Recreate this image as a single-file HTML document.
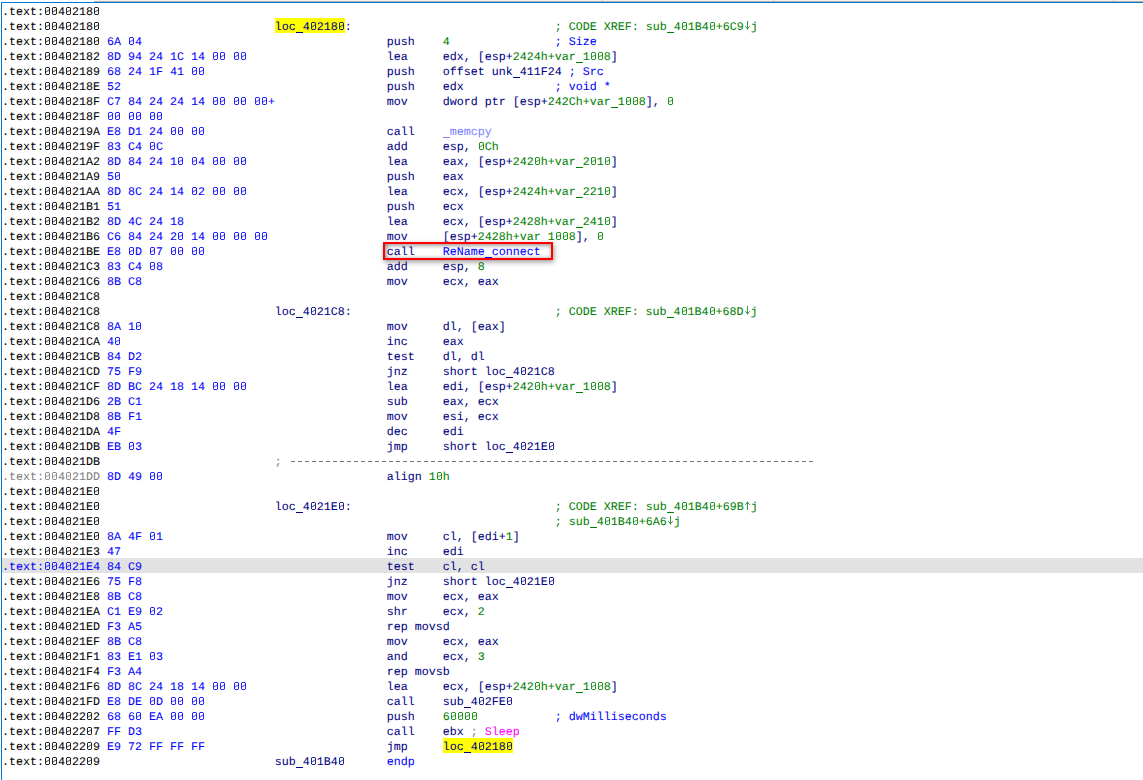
<!DOCTYPE html>
<html><head><meta charset="utf-8"><style>
html,body{margin:0;padding:0;background:#fff;}
body{width:1143px;height:780px;position:relative;overflow:hidden;font-family:"Liberation Mono",monospace;font-size:11.665px;text-rendering:geometricPrecision;-webkit-text-stroke:0.05px currentColor;}
#topbar{position:absolute;left:94px;top:0;width:1049px;height:1px;background:#f3f3f3;}
#topline{position:absolute;left:94px;top:1px;width:1049px;height:1px;background:#b8b0a8;}
#frame{position:absolute;left:1px;top:2px;width:1200px;height:800px;border-left:1px solid #0078d7;border-top:1px solid #0078d7;}
.r{position:absolute;left:2px;height:15px;line-height:15px;white-space:pre;margin-top:2px;}
.hl{position:absolute;left:2px;width:1141px;height:15px;background:#e2e2e2;}
.yl{position:absolute;width:70px;height:15px;background:#ffff00;}
.k{color:#000}
.n{color:#000080}
.g{color:#008000}
.b{color:#0000ff}
.c{color:#0000ff}
.gr{color:#808080}
.lib{color:#8080ff}
.m{color:#ff00ff}
#box{position:absolute;left:383px;top:242px;width:166px;height:14px;border:2px solid #ff0000;box-shadow:1px 2px 5px rgba(0,0,0,0.4), inset 1px 1px 5px rgba(0,0,0,0.5);}
.u{position:relative;-webkit-text-fill-color:transparent;-webkit-text-stroke-color:transparent;}
.u::after{content:'';position:absolute;left:0;top:12px;width:7px;height:1px;background:currentColor;}
.ar{position:relative;}
.ar svg{position:absolute;left:0;top:-2px;}
.dv{position:absolute;top:0;width:1px;height:1px;background:#c8c8c8;}
#dash{position:absolute;left:289px;top:461px;width:525px;height:1px;background:repeating-linear-gradient(to right,transparent 0,transparent 2px,#787878 2px,#787878 6px,transparent 6px,transparent 7px);}
.zr path{fill:currentColor;}

</style></head><body>
<div id="topbar"></div><div class="dv" style="left:602px"></div><div class="dv" style="left:773px"></div><div class="dv" style="left:1113px"></div><div id="topline"></div><div id="frame"></div>
<div class="yl" style="left:275px;top:18px"></div>
<div class="yl" style="left:443px;top:738px"></div>
<div class="hl" style="top:558px"></div>
<div class="r" style="top:3px"><span class="k">.text:<span class="ar zr"> <svg width="7" height="15"><path d="M2 4h3v1h-3zM2 11h3v1h-3zM1 5h1v6h-1zM5 5h1v6h-1z" opacity=".85"/><path d="M1 4h1v1h-1zM5 4h1v1h-1zM1 11h1v1h-1zM5 11h1v1h-1z" opacity=".25"/><path d="M1.9 8.9L5.1 7.1" stroke="currentColor" stroke-width="1.1" opacity=".6"/></svg></span><span class="ar zr"> <svg width="7" height="15"><path d="M2 4h3v1h-3zM2 11h3v1h-3zM1 5h1v6h-1zM5 5h1v6h-1z" opacity=".85"/><path d="M1 4h1v1h-1zM5 4h1v1h-1zM1 11h1v1h-1zM5 11h1v1h-1z" opacity=".25"/><path d="M1.9 8.9L5.1 7.1" stroke="currentColor" stroke-width="1.1" opacity=".6"/></svg></span>4<span class="ar zr"> <svg width="7" height="15"><path d="M2 4h3v1h-3zM2 11h3v1h-3zM1 5h1v6h-1zM5 5h1v6h-1z" opacity=".85"/><path d="M1 4h1v1h-1zM5 4h1v1h-1zM1 11h1v1h-1zM5 11h1v1h-1z" opacity=".25"/><path d="M1.9 8.9L5.1 7.1" stroke="currentColor" stroke-width="1.1" opacity=".6"/></svg></span>218<span class="ar zr"> <svg width="7" height="15"><path d="M2 4h3v1h-3zM2 11h3v1h-3zM1 5h1v6h-1zM5 5h1v6h-1z" opacity=".85"/><path d="M1 4h1v1h-1zM5 4h1v1h-1zM1 11h1v1h-1zM5 11h1v1h-1z" opacity=".25"/><path d="M1.9 8.9L5.1 7.1" stroke="currentColor" stroke-width="1.1" opacity=".6"/></svg></span></span></div>
<div class="r" style="top:18px"><span class="k">.text:<span class="ar zr"> <svg width="7" height="15"><path d="M2 4h3v1h-3zM2 11h3v1h-3zM1 5h1v6h-1zM5 5h1v6h-1z" opacity=".85"/><path d="M1 4h1v1h-1zM5 4h1v1h-1zM1 11h1v1h-1zM5 11h1v1h-1z" opacity=".25"/><path d="M1.9 8.9L5.1 7.1" stroke="currentColor" stroke-width="1.1" opacity=".6"/></svg></span><span class="ar zr"> <svg width="7" height="15"><path d="M2 4h3v1h-3zM2 11h3v1h-3zM1 5h1v6h-1zM5 5h1v6h-1z" opacity=".85"/><path d="M1 4h1v1h-1zM5 4h1v1h-1zM1 11h1v1h-1zM5 11h1v1h-1z" opacity=".25"/><path d="M1.9 8.9L5.1 7.1" stroke="currentColor" stroke-width="1.1" opacity=".6"/></svg></span>4<span class="ar zr"> <svg width="7" height="15"><path d="M2 4h3v1h-3zM2 11h3v1h-3zM1 5h1v6h-1zM5 5h1v6h-1z" opacity=".85"/><path d="M1 4h1v1h-1zM5 4h1v1h-1zM1 11h1v1h-1zM5 11h1v1h-1z" opacity=".25"/><path d="M1.9 8.9L5.1 7.1" stroke="currentColor" stroke-width="1.1" opacity=".6"/></svg></span>218<span class="ar zr"> <svg width="7" height="15"><path d="M2 4h3v1h-3zM2 11h3v1h-3zM1 5h1v6h-1zM5 5h1v6h-1z" opacity=".85"/><path d="M1 4h1v1h-1zM5 4h1v1h-1zM1 11h1v1h-1zM5 11h1v1h-1z" opacity=".25"/><path d="M1.9 8.9L5.1 7.1" stroke="currentColor" stroke-width="1.1" opacity=".6"/></svg></span></span>                         <span class="n">loc<span class="u">_</span>4<span class="ar zr"> <svg width="7" height="15"><path d="M2 4h3v1h-3zM2 11h3v1h-3zM1 5h1v6h-1zM5 5h1v6h-1z" opacity=".85"/><path d="M1 4h1v1h-1zM5 4h1v1h-1zM1 11h1v1h-1zM5 11h1v1h-1z" opacity=".25"/><path d="M1.9 8.9L5.1 7.1" stroke="currentColor" stroke-width="1.1" opacity=".6"/></svg></span>218<span class="ar zr"> <svg width="7" height="15"><path d="M2 4h3v1h-3zM2 11h3v1h-3zM1 5h1v6h-1zM5 5h1v6h-1z" opacity=".85"/><path d="M1 4h1v1h-1zM5 4h1v1h-1zM1 11h1v1h-1zM5 11h1v1h-1z" opacity=".25"/><path d="M1.9 8.9L5.1 7.1" stroke="currentColor" stroke-width="1.1" opacity=".6"/></svg></span></span><span class="n">:</span>                             <span class="g">; CODE XREF: sub<span class="u">_</span>4<span class="ar zr"> <svg width="7" height="15"><path d="M2 4h3v1h-3zM2 11h3v1h-3zM1 5h1v6h-1zM5 5h1v6h-1z" opacity=".85"/><path d="M1 4h1v1h-1zM5 4h1v1h-1zM1 11h1v1h-1zM5 11h1v1h-1z" opacity=".25"/><path d="M1.9 8.9L5.1 7.1" stroke="currentColor" stroke-width="1.1" opacity=".6"/></svg></span>1B4<span class="ar zr"> <svg width="7" height="15"><path d="M2 4h3v1h-3zM2 11h3v1h-3zM1 5h1v6h-1zM5 5h1v6h-1z" opacity=".85"/><path d="M1 4h1v1h-1zM5 4h1v1h-1zM1 11h1v1h-1zM5 11h1v1h-1z" opacity=".25"/><path d="M1.9 8.9L5.1 7.1" stroke="currentColor" stroke-width="1.1" opacity=".6"/></svg></span>+6C9<span class="ar"> <svg width="7" height="15" viewBox="0 0 7 15"><path d="M3.5 3V11.5M1.2 8.2L3.5 10.8L5.8 8.2" stroke="currentColor" stroke-width="1" fill="none" opacity=".8"/></svg></span>j</span></div>
<div class="r" style="top:33px"><span class="k">.text:<span class="ar zr"> <svg width="7" height="15"><path d="M2 4h3v1h-3zM2 11h3v1h-3zM1 5h1v6h-1zM5 5h1v6h-1z" opacity=".85"/><path d="M1 4h1v1h-1zM5 4h1v1h-1zM1 11h1v1h-1zM5 11h1v1h-1z" opacity=".25"/><path d="M1.9 8.9L5.1 7.1" stroke="currentColor" stroke-width="1.1" opacity=".6"/></svg></span><span class="ar zr"> <svg width="7" height="15"><path d="M2 4h3v1h-3zM2 11h3v1h-3zM1 5h1v6h-1zM5 5h1v6h-1z" opacity=".85"/><path d="M1 4h1v1h-1zM5 4h1v1h-1zM1 11h1v1h-1zM5 11h1v1h-1z" opacity=".25"/><path d="M1.9 8.9L5.1 7.1" stroke="currentColor" stroke-width="1.1" opacity=".6"/></svg></span>4<span class="ar zr"> <svg width="7" height="15"><path d="M2 4h3v1h-3zM2 11h3v1h-3zM1 5h1v6h-1zM5 5h1v6h-1z" opacity=".85"/><path d="M1 4h1v1h-1zM5 4h1v1h-1zM1 11h1v1h-1zM5 11h1v1h-1z" opacity=".25"/><path d="M1.9 8.9L5.1 7.1" stroke="currentColor" stroke-width="1.1" opacity=".6"/></svg></span>218<span class="ar zr"> <svg width="7" height="15"><path d="M2 4h3v1h-3zM2 11h3v1h-3zM1 5h1v6h-1zM5 5h1v6h-1z" opacity=".85"/><path d="M1 4h1v1h-1zM5 4h1v1h-1zM1 11h1v1h-1zM5 11h1v1h-1z" opacity=".25"/><path d="M1.9 8.9L5.1 7.1" stroke="currentColor" stroke-width="1.1" opacity=".6"/></svg></span></span> <span class="b">6A <span class="ar zr"> <svg width="7" height="15"><path d="M2 4h3v1h-3zM2 11h3v1h-3zM1 5h1v6h-1zM5 5h1v6h-1z" opacity=".85"/><path d="M1 4h1v1h-1zM5 4h1v1h-1zM1 11h1v1h-1zM5 11h1v1h-1z" opacity=".25"/><path d="M1.9 8.9L5.1 7.1" stroke="currentColor" stroke-width="1.1" opacity=".6"/></svg></span>4</span>                                   <span class="n">push</span>    <span class="g">4</span>               <span class="c">; Size</span></div>
<div class="r" style="top:48px"><span class="k">.text:<span class="ar zr"> <svg width="7" height="15"><path d="M2 4h3v1h-3zM2 11h3v1h-3zM1 5h1v6h-1zM5 5h1v6h-1z" opacity=".85"/><path d="M1 4h1v1h-1zM5 4h1v1h-1zM1 11h1v1h-1zM5 11h1v1h-1z" opacity=".25"/><path d="M1.9 8.9L5.1 7.1" stroke="currentColor" stroke-width="1.1" opacity=".6"/></svg></span><span class="ar zr"> <svg width="7" height="15"><path d="M2 4h3v1h-3zM2 11h3v1h-3zM1 5h1v6h-1zM5 5h1v6h-1z" opacity=".85"/><path d="M1 4h1v1h-1zM5 4h1v1h-1zM1 11h1v1h-1zM5 11h1v1h-1z" opacity=".25"/><path d="M1.9 8.9L5.1 7.1" stroke="currentColor" stroke-width="1.1" opacity=".6"/></svg></span>4<span class="ar zr"> <svg width="7" height="15"><path d="M2 4h3v1h-3zM2 11h3v1h-3zM1 5h1v6h-1zM5 5h1v6h-1z" opacity=".85"/><path d="M1 4h1v1h-1zM5 4h1v1h-1zM1 11h1v1h-1zM5 11h1v1h-1z" opacity=".25"/><path d="M1.9 8.9L5.1 7.1" stroke="currentColor" stroke-width="1.1" opacity=".6"/></svg></span>2182</span> <span class="b">8D 94 24 1C 14 <span class="ar zr"> <svg width="7" height="15"><path d="M2 4h3v1h-3zM2 11h3v1h-3zM1 5h1v6h-1zM5 5h1v6h-1z" opacity=".85"/><path d="M1 4h1v1h-1zM5 4h1v1h-1zM1 11h1v1h-1zM5 11h1v1h-1z" opacity=".25"/><path d="M1.9 8.9L5.1 7.1" stroke="currentColor" stroke-width="1.1" opacity=".6"/></svg></span><span class="ar zr"> <svg width="7" height="15"><path d="M2 4h3v1h-3zM2 11h3v1h-3zM1 5h1v6h-1zM5 5h1v6h-1z" opacity=".85"/><path d="M1 4h1v1h-1zM5 4h1v1h-1zM1 11h1v1h-1zM5 11h1v1h-1z" opacity=".25"/><path d="M1.9 8.9L5.1 7.1" stroke="currentColor" stroke-width="1.1" opacity=".6"/></svg></span> <span class="ar zr"> <svg width="7" height="15"><path d="M2 4h3v1h-3zM2 11h3v1h-3zM1 5h1v6h-1zM5 5h1v6h-1z" opacity=".85"/><path d="M1 4h1v1h-1zM5 4h1v1h-1zM1 11h1v1h-1zM5 11h1v1h-1z" opacity=".25"/><path d="M1.9 8.9L5.1 7.1" stroke="currentColor" stroke-width="1.1" opacity=".6"/></svg></span><span class="ar zr"> <svg width="7" height="15"><path d="M2 4h3v1h-3zM2 11h3v1h-3zM1 5h1v6h-1zM5 5h1v6h-1z" opacity=".85"/><path d="M1 4h1v1h-1zM5 4h1v1h-1zM1 11h1v1h-1zM5 11h1v1h-1z" opacity=".25"/><path d="M1.9 8.9L5.1 7.1" stroke="currentColor" stroke-width="1.1" opacity=".6"/></svg></span></span>                    <span class="n">lea</span>     <span class="n">edx, [esp+</span><span class="g">2424h+var<span class="u">_</span>1<span class="ar zr"> <svg width="7" height="15"><path d="M2 4h3v1h-3zM2 11h3v1h-3zM1 5h1v6h-1zM5 5h1v6h-1z" opacity=".85"/><path d="M1 4h1v1h-1zM5 4h1v1h-1zM1 11h1v1h-1zM5 11h1v1h-1z" opacity=".25"/><path d="M1.9 8.9L5.1 7.1" stroke="currentColor" stroke-width="1.1" opacity=".6"/></svg></span><span class="ar zr"> <svg width="7" height="15"><path d="M2 4h3v1h-3zM2 11h3v1h-3zM1 5h1v6h-1zM5 5h1v6h-1z" opacity=".85"/><path d="M1 4h1v1h-1zM5 4h1v1h-1zM1 11h1v1h-1zM5 11h1v1h-1z" opacity=".25"/><path d="M1.9 8.9L5.1 7.1" stroke="currentColor" stroke-width="1.1" opacity=".6"/></svg></span>8</span><span class="n">]</span></div>
<div class="r" style="top:63px"><span class="k">.text:<span class="ar zr"> <svg width="7" height="15"><path d="M2 4h3v1h-3zM2 11h3v1h-3zM1 5h1v6h-1zM5 5h1v6h-1z" opacity=".85"/><path d="M1 4h1v1h-1zM5 4h1v1h-1zM1 11h1v1h-1zM5 11h1v1h-1z" opacity=".25"/><path d="M1.9 8.9L5.1 7.1" stroke="currentColor" stroke-width="1.1" opacity=".6"/></svg></span><span class="ar zr"> <svg width="7" height="15"><path d="M2 4h3v1h-3zM2 11h3v1h-3zM1 5h1v6h-1zM5 5h1v6h-1z" opacity=".85"/><path d="M1 4h1v1h-1zM5 4h1v1h-1zM1 11h1v1h-1zM5 11h1v1h-1z" opacity=".25"/><path d="M1.9 8.9L5.1 7.1" stroke="currentColor" stroke-width="1.1" opacity=".6"/></svg></span>4<span class="ar zr"> <svg width="7" height="15"><path d="M2 4h3v1h-3zM2 11h3v1h-3zM1 5h1v6h-1zM5 5h1v6h-1z" opacity=".85"/><path d="M1 4h1v1h-1zM5 4h1v1h-1zM1 11h1v1h-1zM5 11h1v1h-1z" opacity=".25"/><path d="M1.9 8.9L5.1 7.1" stroke="currentColor" stroke-width="1.1" opacity=".6"/></svg></span>2189</span> <span class="b">68 24 1F 41 <span class="ar zr"> <svg width="7" height="15"><path d="M2 4h3v1h-3zM2 11h3v1h-3zM1 5h1v6h-1zM5 5h1v6h-1z" opacity=".85"/><path d="M1 4h1v1h-1zM5 4h1v1h-1zM1 11h1v1h-1zM5 11h1v1h-1z" opacity=".25"/><path d="M1.9 8.9L5.1 7.1" stroke="currentColor" stroke-width="1.1" opacity=".6"/></svg></span><span class="ar zr"> <svg width="7" height="15"><path d="M2 4h3v1h-3zM2 11h3v1h-3zM1 5h1v6h-1zM5 5h1v6h-1z" opacity=".85"/><path d="M1 4h1v1h-1zM5 4h1v1h-1zM1 11h1v1h-1zM5 11h1v1h-1z" opacity=".25"/><path d="M1.9 8.9L5.1 7.1" stroke="currentColor" stroke-width="1.1" opacity=".6"/></svg></span></span>                          <span class="n">push</span>    <span class="n">offset unk<span class="u">_</span>411F24</span><span class="c"> ; Src</span></div>
<div class="r" style="top:78px"><span class="k">.text:<span class="ar zr"> <svg width="7" height="15"><path d="M2 4h3v1h-3zM2 11h3v1h-3zM1 5h1v6h-1zM5 5h1v6h-1z" opacity=".85"/><path d="M1 4h1v1h-1zM5 4h1v1h-1zM1 11h1v1h-1zM5 11h1v1h-1z" opacity=".25"/><path d="M1.9 8.9L5.1 7.1" stroke="currentColor" stroke-width="1.1" opacity=".6"/></svg></span><span class="ar zr"> <svg width="7" height="15"><path d="M2 4h3v1h-3zM2 11h3v1h-3zM1 5h1v6h-1zM5 5h1v6h-1z" opacity=".85"/><path d="M1 4h1v1h-1zM5 4h1v1h-1zM1 11h1v1h-1zM5 11h1v1h-1z" opacity=".25"/><path d="M1.9 8.9L5.1 7.1" stroke="currentColor" stroke-width="1.1" opacity=".6"/></svg></span>4<span class="ar zr"> <svg width="7" height="15"><path d="M2 4h3v1h-3zM2 11h3v1h-3zM1 5h1v6h-1zM5 5h1v6h-1z" opacity=".85"/><path d="M1 4h1v1h-1zM5 4h1v1h-1zM1 11h1v1h-1zM5 11h1v1h-1z" opacity=".25"/><path d="M1.9 8.9L5.1 7.1" stroke="currentColor" stroke-width="1.1" opacity=".6"/></svg></span>218E</span> <span class="b">52</span>                                      <span class="n">push</span>    <span class="n">edx</span>             <span class="c">; void *</span></div>
<div class="r" style="top:93px"><span class="k">.text:<span class="ar zr"> <svg width="7" height="15"><path d="M2 4h3v1h-3zM2 11h3v1h-3zM1 5h1v6h-1zM5 5h1v6h-1z" opacity=".85"/><path d="M1 4h1v1h-1zM5 4h1v1h-1zM1 11h1v1h-1zM5 11h1v1h-1z" opacity=".25"/><path d="M1.9 8.9L5.1 7.1" stroke="currentColor" stroke-width="1.1" opacity=".6"/></svg></span><span class="ar zr"> <svg width="7" height="15"><path d="M2 4h3v1h-3zM2 11h3v1h-3zM1 5h1v6h-1zM5 5h1v6h-1z" opacity=".85"/><path d="M1 4h1v1h-1zM5 4h1v1h-1zM1 11h1v1h-1zM5 11h1v1h-1z" opacity=".25"/><path d="M1.9 8.9L5.1 7.1" stroke="currentColor" stroke-width="1.1" opacity=".6"/></svg></span>4<span class="ar zr"> <svg width="7" height="15"><path d="M2 4h3v1h-3zM2 11h3v1h-3zM1 5h1v6h-1zM5 5h1v6h-1z" opacity=".85"/><path d="M1 4h1v1h-1zM5 4h1v1h-1zM1 11h1v1h-1zM5 11h1v1h-1z" opacity=".25"/><path d="M1.9 8.9L5.1 7.1" stroke="currentColor" stroke-width="1.1" opacity=".6"/></svg></span>218F</span> <span class="b">C7 84 24 24 14 <span class="ar zr"> <svg width="7" height="15"><path d="M2 4h3v1h-3zM2 11h3v1h-3zM1 5h1v6h-1zM5 5h1v6h-1z" opacity=".85"/><path d="M1 4h1v1h-1zM5 4h1v1h-1zM1 11h1v1h-1zM5 11h1v1h-1z" opacity=".25"/><path d="M1.9 8.9L5.1 7.1" stroke="currentColor" stroke-width="1.1" opacity=".6"/></svg></span><span class="ar zr"> <svg width="7" height="15"><path d="M2 4h3v1h-3zM2 11h3v1h-3zM1 5h1v6h-1zM5 5h1v6h-1z" opacity=".85"/><path d="M1 4h1v1h-1zM5 4h1v1h-1zM1 11h1v1h-1zM5 11h1v1h-1z" opacity=".25"/><path d="M1.9 8.9L5.1 7.1" stroke="currentColor" stroke-width="1.1" opacity=".6"/></svg></span> <span class="ar zr"> <svg width="7" height="15"><path d="M2 4h3v1h-3zM2 11h3v1h-3zM1 5h1v6h-1zM5 5h1v6h-1z" opacity=".85"/><path d="M1 4h1v1h-1zM5 4h1v1h-1zM1 11h1v1h-1zM5 11h1v1h-1z" opacity=".25"/><path d="M1.9 8.9L5.1 7.1" stroke="currentColor" stroke-width="1.1" opacity=".6"/></svg></span><span class="ar zr"> <svg width="7" height="15"><path d="M2 4h3v1h-3zM2 11h3v1h-3zM1 5h1v6h-1zM5 5h1v6h-1z" opacity=".85"/><path d="M1 4h1v1h-1zM5 4h1v1h-1zM1 11h1v1h-1zM5 11h1v1h-1z" opacity=".25"/><path d="M1.9 8.9L5.1 7.1" stroke="currentColor" stroke-width="1.1" opacity=".6"/></svg></span> <span class="ar zr"> <svg width="7" height="15"><path d="M2 4h3v1h-3zM2 11h3v1h-3zM1 5h1v6h-1zM5 5h1v6h-1z" opacity=".85"/><path d="M1 4h1v1h-1zM5 4h1v1h-1zM1 11h1v1h-1zM5 11h1v1h-1z" opacity=".25"/><path d="M1.9 8.9L5.1 7.1" stroke="currentColor" stroke-width="1.1" opacity=".6"/></svg></span><span class="ar zr"> <svg width="7" height="15"><path d="M2 4h3v1h-3zM2 11h3v1h-3zM1 5h1v6h-1zM5 5h1v6h-1z" opacity=".85"/><path d="M1 4h1v1h-1zM5 4h1v1h-1zM1 11h1v1h-1zM5 11h1v1h-1z" opacity=".25"/><path d="M1.9 8.9L5.1 7.1" stroke="currentColor" stroke-width="1.1" opacity=".6"/></svg></span>+</span>                <span class="n">mov</span>     <span class="n">dword ptr [esp+</span><span class="g">242Ch+var<span class="u">_</span>1<span class="ar zr"> <svg width="7" height="15"><path d="M2 4h3v1h-3zM2 11h3v1h-3zM1 5h1v6h-1zM5 5h1v6h-1z" opacity=".85"/><path d="M1 4h1v1h-1zM5 4h1v1h-1zM1 11h1v1h-1zM5 11h1v1h-1z" opacity=".25"/><path d="M1.9 8.9L5.1 7.1" stroke="currentColor" stroke-width="1.1" opacity=".6"/></svg></span><span class="ar zr"> <svg width="7" height="15"><path d="M2 4h3v1h-3zM2 11h3v1h-3zM1 5h1v6h-1zM5 5h1v6h-1z" opacity=".85"/><path d="M1 4h1v1h-1zM5 4h1v1h-1zM1 11h1v1h-1zM5 11h1v1h-1z" opacity=".25"/><path d="M1.9 8.9L5.1 7.1" stroke="currentColor" stroke-width="1.1" opacity=".6"/></svg></span>8</span><span class="n">], </span><span class="g"><span class="ar zr"> <svg width="7" height="15"><path d="M2 4h3v1h-3zM2 11h3v1h-3zM1 5h1v6h-1zM5 5h1v6h-1z" opacity=".85"/><path d="M1 4h1v1h-1zM5 4h1v1h-1zM1 11h1v1h-1zM5 11h1v1h-1z" opacity=".25"/><path d="M1.9 8.9L5.1 7.1" stroke="currentColor" stroke-width="1.1" opacity=".6"/></svg></span></span></div>
<div class="r" style="top:108px"><span class="k">.text:<span class="ar zr"> <svg width="7" height="15"><path d="M2 4h3v1h-3zM2 11h3v1h-3zM1 5h1v6h-1zM5 5h1v6h-1z" opacity=".85"/><path d="M1 4h1v1h-1zM5 4h1v1h-1zM1 11h1v1h-1zM5 11h1v1h-1z" opacity=".25"/><path d="M1.9 8.9L5.1 7.1" stroke="currentColor" stroke-width="1.1" opacity=".6"/></svg></span><span class="ar zr"> <svg width="7" height="15"><path d="M2 4h3v1h-3zM2 11h3v1h-3zM1 5h1v6h-1zM5 5h1v6h-1z" opacity=".85"/><path d="M1 4h1v1h-1zM5 4h1v1h-1zM1 11h1v1h-1zM5 11h1v1h-1z" opacity=".25"/><path d="M1.9 8.9L5.1 7.1" stroke="currentColor" stroke-width="1.1" opacity=".6"/></svg></span>4<span class="ar zr"> <svg width="7" height="15"><path d="M2 4h3v1h-3zM2 11h3v1h-3zM1 5h1v6h-1zM5 5h1v6h-1z" opacity=".85"/><path d="M1 4h1v1h-1zM5 4h1v1h-1zM1 11h1v1h-1zM5 11h1v1h-1z" opacity=".25"/><path d="M1.9 8.9L5.1 7.1" stroke="currentColor" stroke-width="1.1" opacity=".6"/></svg></span>218F</span> <span class="b"><span class="ar zr"> <svg width="7" height="15"><path d="M2 4h3v1h-3zM2 11h3v1h-3zM1 5h1v6h-1zM5 5h1v6h-1z" opacity=".85"/><path d="M1 4h1v1h-1zM5 4h1v1h-1zM1 11h1v1h-1zM5 11h1v1h-1z" opacity=".25"/><path d="M1.9 8.9L5.1 7.1" stroke="currentColor" stroke-width="1.1" opacity=".6"/></svg></span><span class="ar zr"> <svg width="7" height="15"><path d="M2 4h3v1h-3zM2 11h3v1h-3zM1 5h1v6h-1zM5 5h1v6h-1z" opacity=".85"/><path d="M1 4h1v1h-1zM5 4h1v1h-1zM1 11h1v1h-1zM5 11h1v1h-1z" opacity=".25"/><path d="M1.9 8.9L5.1 7.1" stroke="currentColor" stroke-width="1.1" opacity=".6"/></svg></span> <span class="ar zr"> <svg width="7" height="15"><path d="M2 4h3v1h-3zM2 11h3v1h-3zM1 5h1v6h-1zM5 5h1v6h-1z" opacity=".85"/><path d="M1 4h1v1h-1zM5 4h1v1h-1zM1 11h1v1h-1zM5 11h1v1h-1z" opacity=".25"/><path d="M1.9 8.9L5.1 7.1" stroke="currentColor" stroke-width="1.1" opacity=".6"/></svg></span><span class="ar zr"> <svg width="7" height="15"><path d="M2 4h3v1h-3zM2 11h3v1h-3zM1 5h1v6h-1zM5 5h1v6h-1z" opacity=".85"/><path d="M1 4h1v1h-1zM5 4h1v1h-1zM1 11h1v1h-1zM5 11h1v1h-1z" opacity=".25"/><path d="M1.9 8.9L5.1 7.1" stroke="currentColor" stroke-width="1.1" opacity=".6"/></svg></span> <span class="ar zr"> <svg width="7" height="15"><path d="M2 4h3v1h-3zM2 11h3v1h-3zM1 5h1v6h-1zM5 5h1v6h-1z" opacity=".85"/><path d="M1 4h1v1h-1zM5 4h1v1h-1zM1 11h1v1h-1zM5 11h1v1h-1z" opacity=".25"/><path d="M1.9 8.9L5.1 7.1" stroke="currentColor" stroke-width="1.1" opacity=".6"/></svg></span><span class="ar zr"> <svg width="7" height="15"><path d="M2 4h3v1h-3zM2 11h3v1h-3zM1 5h1v6h-1zM5 5h1v6h-1z" opacity=".85"/><path d="M1 4h1v1h-1zM5 4h1v1h-1zM1 11h1v1h-1zM5 11h1v1h-1z" opacity=".25"/><path d="M1.9 8.9L5.1 7.1" stroke="currentColor" stroke-width="1.1" opacity=".6"/></svg></span></span></div>
<div class="r" style="top:123px"><span class="k">.text:<span class="ar zr"> <svg width="7" height="15"><path d="M2 4h3v1h-3zM2 11h3v1h-3zM1 5h1v6h-1zM5 5h1v6h-1z" opacity=".85"/><path d="M1 4h1v1h-1zM5 4h1v1h-1zM1 11h1v1h-1zM5 11h1v1h-1z" opacity=".25"/><path d="M1.9 8.9L5.1 7.1" stroke="currentColor" stroke-width="1.1" opacity=".6"/></svg></span><span class="ar zr"> <svg width="7" height="15"><path d="M2 4h3v1h-3zM2 11h3v1h-3zM1 5h1v6h-1zM5 5h1v6h-1z" opacity=".85"/><path d="M1 4h1v1h-1zM5 4h1v1h-1zM1 11h1v1h-1zM5 11h1v1h-1z" opacity=".25"/><path d="M1.9 8.9L5.1 7.1" stroke="currentColor" stroke-width="1.1" opacity=".6"/></svg></span>4<span class="ar zr"> <svg width="7" height="15"><path d="M2 4h3v1h-3zM2 11h3v1h-3zM1 5h1v6h-1zM5 5h1v6h-1z" opacity=".85"/><path d="M1 4h1v1h-1zM5 4h1v1h-1zM1 11h1v1h-1zM5 11h1v1h-1z" opacity=".25"/><path d="M1.9 8.9L5.1 7.1" stroke="currentColor" stroke-width="1.1" opacity=".6"/></svg></span>219A</span> <span class="b">E8 D1 24 <span class="ar zr"> <svg width="7" height="15"><path d="M2 4h3v1h-3zM2 11h3v1h-3zM1 5h1v6h-1zM5 5h1v6h-1z" opacity=".85"/><path d="M1 4h1v1h-1zM5 4h1v1h-1zM1 11h1v1h-1zM5 11h1v1h-1z" opacity=".25"/><path d="M1.9 8.9L5.1 7.1" stroke="currentColor" stroke-width="1.1" opacity=".6"/></svg></span><span class="ar zr"> <svg width="7" height="15"><path d="M2 4h3v1h-3zM2 11h3v1h-3zM1 5h1v6h-1zM5 5h1v6h-1z" opacity=".85"/><path d="M1 4h1v1h-1zM5 4h1v1h-1zM1 11h1v1h-1zM5 11h1v1h-1z" opacity=".25"/><path d="M1.9 8.9L5.1 7.1" stroke="currentColor" stroke-width="1.1" opacity=".6"/></svg></span> <span class="ar zr"> <svg width="7" height="15"><path d="M2 4h3v1h-3zM2 11h3v1h-3zM1 5h1v6h-1zM5 5h1v6h-1z" opacity=".85"/><path d="M1 4h1v1h-1zM5 4h1v1h-1zM1 11h1v1h-1zM5 11h1v1h-1z" opacity=".25"/><path d="M1.9 8.9L5.1 7.1" stroke="currentColor" stroke-width="1.1" opacity=".6"/></svg></span><span class="ar zr"> <svg width="7" height="15"><path d="M2 4h3v1h-3zM2 11h3v1h-3zM1 5h1v6h-1zM5 5h1v6h-1z" opacity=".85"/><path d="M1 4h1v1h-1zM5 4h1v1h-1zM1 11h1v1h-1zM5 11h1v1h-1z" opacity=".25"/><path d="M1.9 8.9L5.1 7.1" stroke="currentColor" stroke-width="1.1" opacity=".6"/></svg></span></span>                          <span class="n">call</span>    <span class="lib"><span class="u">_</span>memcpy</span></div>
<div class="r" style="top:138px"><span class="k">.text:<span class="ar zr"> <svg width="7" height="15"><path d="M2 4h3v1h-3zM2 11h3v1h-3zM1 5h1v6h-1zM5 5h1v6h-1z" opacity=".85"/><path d="M1 4h1v1h-1zM5 4h1v1h-1zM1 11h1v1h-1zM5 11h1v1h-1z" opacity=".25"/><path d="M1.9 8.9L5.1 7.1" stroke="currentColor" stroke-width="1.1" opacity=".6"/></svg></span><span class="ar zr"> <svg width="7" height="15"><path d="M2 4h3v1h-3zM2 11h3v1h-3zM1 5h1v6h-1zM5 5h1v6h-1z" opacity=".85"/><path d="M1 4h1v1h-1zM5 4h1v1h-1zM1 11h1v1h-1zM5 11h1v1h-1z" opacity=".25"/><path d="M1.9 8.9L5.1 7.1" stroke="currentColor" stroke-width="1.1" opacity=".6"/></svg></span>4<span class="ar zr"> <svg width="7" height="15"><path d="M2 4h3v1h-3zM2 11h3v1h-3zM1 5h1v6h-1zM5 5h1v6h-1z" opacity=".85"/><path d="M1 4h1v1h-1zM5 4h1v1h-1zM1 11h1v1h-1zM5 11h1v1h-1z" opacity=".25"/><path d="M1.9 8.9L5.1 7.1" stroke="currentColor" stroke-width="1.1" opacity=".6"/></svg></span>219F</span> <span class="b">83 C4 <span class="ar zr"> <svg width="7" height="15"><path d="M2 4h3v1h-3zM2 11h3v1h-3zM1 5h1v6h-1zM5 5h1v6h-1z" opacity=".85"/><path d="M1 4h1v1h-1zM5 4h1v1h-1zM1 11h1v1h-1zM5 11h1v1h-1z" opacity=".25"/><path d="M1.9 8.9L5.1 7.1" stroke="currentColor" stroke-width="1.1" opacity=".6"/></svg></span>C</span>                                <span class="n">add</span>     <span class="n">esp, </span><span class="g"><span class="ar zr"> <svg width="7" height="15"><path d="M2 4h3v1h-3zM2 11h3v1h-3zM1 5h1v6h-1zM5 5h1v6h-1z" opacity=".85"/><path d="M1 4h1v1h-1zM5 4h1v1h-1zM1 11h1v1h-1zM5 11h1v1h-1z" opacity=".25"/><path d="M1.9 8.9L5.1 7.1" stroke="currentColor" stroke-width="1.1" opacity=".6"/></svg></span>Ch</span></div>
<div class="r" style="top:153px"><span class="k">.text:<span class="ar zr"> <svg width="7" height="15"><path d="M2 4h3v1h-3zM2 11h3v1h-3zM1 5h1v6h-1zM5 5h1v6h-1z" opacity=".85"/><path d="M1 4h1v1h-1zM5 4h1v1h-1zM1 11h1v1h-1zM5 11h1v1h-1z" opacity=".25"/><path d="M1.9 8.9L5.1 7.1" stroke="currentColor" stroke-width="1.1" opacity=".6"/></svg></span><span class="ar zr"> <svg width="7" height="15"><path d="M2 4h3v1h-3zM2 11h3v1h-3zM1 5h1v6h-1zM5 5h1v6h-1z" opacity=".85"/><path d="M1 4h1v1h-1zM5 4h1v1h-1zM1 11h1v1h-1zM5 11h1v1h-1z" opacity=".25"/><path d="M1.9 8.9L5.1 7.1" stroke="currentColor" stroke-width="1.1" opacity=".6"/></svg></span>4<span class="ar zr"> <svg width="7" height="15"><path d="M2 4h3v1h-3zM2 11h3v1h-3zM1 5h1v6h-1zM5 5h1v6h-1z" opacity=".85"/><path d="M1 4h1v1h-1zM5 4h1v1h-1zM1 11h1v1h-1zM5 11h1v1h-1z" opacity=".25"/><path d="M1.9 8.9L5.1 7.1" stroke="currentColor" stroke-width="1.1" opacity=".6"/></svg></span>21A2</span> <span class="b">8D 84 24 1<span class="ar zr"> <svg width="7" height="15"><path d="M2 4h3v1h-3zM2 11h3v1h-3zM1 5h1v6h-1zM5 5h1v6h-1z" opacity=".85"/><path d="M1 4h1v1h-1zM5 4h1v1h-1zM1 11h1v1h-1zM5 11h1v1h-1z" opacity=".25"/><path d="M1.9 8.9L5.1 7.1" stroke="currentColor" stroke-width="1.1" opacity=".6"/></svg></span> <span class="ar zr"> <svg width="7" height="15"><path d="M2 4h3v1h-3zM2 11h3v1h-3zM1 5h1v6h-1zM5 5h1v6h-1z" opacity=".85"/><path d="M1 4h1v1h-1zM5 4h1v1h-1zM1 11h1v1h-1zM5 11h1v1h-1z" opacity=".25"/><path d="M1.9 8.9L5.1 7.1" stroke="currentColor" stroke-width="1.1" opacity=".6"/></svg></span>4 <span class="ar zr"> <svg width="7" height="15"><path d="M2 4h3v1h-3zM2 11h3v1h-3zM1 5h1v6h-1zM5 5h1v6h-1z" opacity=".85"/><path d="M1 4h1v1h-1zM5 4h1v1h-1zM1 11h1v1h-1zM5 11h1v1h-1z" opacity=".25"/><path d="M1.9 8.9L5.1 7.1" stroke="currentColor" stroke-width="1.1" opacity=".6"/></svg></span><span class="ar zr"> <svg width="7" height="15"><path d="M2 4h3v1h-3zM2 11h3v1h-3zM1 5h1v6h-1zM5 5h1v6h-1z" opacity=".85"/><path d="M1 4h1v1h-1zM5 4h1v1h-1zM1 11h1v1h-1zM5 11h1v1h-1z" opacity=".25"/><path d="M1.9 8.9L5.1 7.1" stroke="currentColor" stroke-width="1.1" opacity=".6"/></svg></span> <span class="ar zr"> <svg width="7" height="15"><path d="M2 4h3v1h-3zM2 11h3v1h-3zM1 5h1v6h-1zM5 5h1v6h-1z" opacity=".85"/><path d="M1 4h1v1h-1zM5 4h1v1h-1zM1 11h1v1h-1zM5 11h1v1h-1z" opacity=".25"/><path d="M1.9 8.9L5.1 7.1" stroke="currentColor" stroke-width="1.1" opacity=".6"/></svg></span><span class="ar zr"> <svg width="7" height="15"><path d="M2 4h3v1h-3zM2 11h3v1h-3zM1 5h1v6h-1zM5 5h1v6h-1z" opacity=".85"/><path d="M1 4h1v1h-1zM5 4h1v1h-1zM1 11h1v1h-1zM5 11h1v1h-1z" opacity=".25"/><path d="M1.9 8.9L5.1 7.1" stroke="currentColor" stroke-width="1.1" opacity=".6"/></svg></span></span>                    <span class="n">lea</span>     <span class="n">eax, [esp+</span><span class="g">242<span class="ar zr"> <svg width="7" height="15"><path d="M2 4h3v1h-3zM2 11h3v1h-3zM1 5h1v6h-1zM5 5h1v6h-1z" opacity=".85"/><path d="M1 4h1v1h-1zM5 4h1v1h-1zM1 11h1v1h-1zM5 11h1v1h-1z" opacity=".25"/><path d="M1.9 8.9L5.1 7.1" stroke="currentColor" stroke-width="1.1" opacity=".6"/></svg></span>h+var<span class="u">_</span>2<span class="ar zr"> <svg width="7" height="15"><path d="M2 4h3v1h-3zM2 11h3v1h-3zM1 5h1v6h-1zM5 5h1v6h-1z" opacity=".85"/><path d="M1 4h1v1h-1zM5 4h1v1h-1zM1 11h1v1h-1zM5 11h1v1h-1z" opacity=".25"/><path d="M1.9 8.9L5.1 7.1" stroke="currentColor" stroke-width="1.1" opacity=".6"/></svg></span>1<span class="ar zr"> <svg width="7" height="15"><path d="M2 4h3v1h-3zM2 11h3v1h-3zM1 5h1v6h-1zM5 5h1v6h-1z" opacity=".85"/><path d="M1 4h1v1h-1zM5 4h1v1h-1zM1 11h1v1h-1zM5 11h1v1h-1z" opacity=".25"/><path d="M1.9 8.9L5.1 7.1" stroke="currentColor" stroke-width="1.1" opacity=".6"/></svg></span></span><span class="n">]</span></div>
<div class="r" style="top:168px"><span class="k">.text:<span class="ar zr"> <svg width="7" height="15"><path d="M2 4h3v1h-3zM2 11h3v1h-3zM1 5h1v6h-1zM5 5h1v6h-1z" opacity=".85"/><path d="M1 4h1v1h-1zM5 4h1v1h-1zM1 11h1v1h-1zM5 11h1v1h-1z" opacity=".25"/><path d="M1.9 8.9L5.1 7.1" stroke="currentColor" stroke-width="1.1" opacity=".6"/></svg></span><span class="ar zr"> <svg width="7" height="15"><path d="M2 4h3v1h-3zM2 11h3v1h-3zM1 5h1v6h-1zM5 5h1v6h-1z" opacity=".85"/><path d="M1 4h1v1h-1zM5 4h1v1h-1zM1 11h1v1h-1zM5 11h1v1h-1z" opacity=".25"/><path d="M1.9 8.9L5.1 7.1" stroke="currentColor" stroke-width="1.1" opacity=".6"/></svg></span>4<span class="ar zr"> <svg width="7" height="15"><path d="M2 4h3v1h-3zM2 11h3v1h-3zM1 5h1v6h-1zM5 5h1v6h-1z" opacity=".85"/><path d="M1 4h1v1h-1zM5 4h1v1h-1zM1 11h1v1h-1zM5 11h1v1h-1z" opacity=".25"/><path d="M1.9 8.9L5.1 7.1" stroke="currentColor" stroke-width="1.1" opacity=".6"/></svg></span>21A9</span> <span class="b">5<span class="ar zr"> <svg width="7" height="15"><path d="M2 4h3v1h-3zM2 11h3v1h-3zM1 5h1v6h-1zM5 5h1v6h-1z" opacity=".85"/><path d="M1 4h1v1h-1zM5 4h1v1h-1zM1 11h1v1h-1zM5 11h1v1h-1z" opacity=".25"/><path d="M1.9 8.9L5.1 7.1" stroke="currentColor" stroke-width="1.1" opacity=".6"/></svg></span></span>                                      <span class="n">push</span>    <span class="n">eax</span></div>
<div class="r" style="top:183px"><span class="k">.text:<span class="ar zr"> <svg width="7" height="15"><path d="M2 4h3v1h-3zM2 11h3v1h-3zM1 5h1v6h-1zM5 5h1v6h-1z" opacity=".85"/><path d="M1 4h1v1h-1zM5 4h1v1h-1zM1 11h1v1h-1zM5 11h1v1h-1z" opacity=".25"/><path d="M1.9 8.9L5.1 7.1" stroke="currentColor" stroke-width="1.1" opacity=".6"/></svg></span><span class="ar zr"> <svg width="7" height="15"><path d="M2 4h3v1h-3zM2 11h3v1h-3zM1 5h1v6h-1zM5 5h1v6h-1z" opacity=".85"/><path d="M1 4h1v1h-1zM5 4h1v1h-1zM1 11h1v1h-1zM5 11h1v1h-1z" opacity=".25"/><path d="M1.9 8.9L5.1 7.1" stroke="currentColor" stroke-width="1.1" opacity=".6"/></svg></span>4<span class="ar zr"> <svg width="7" height="15"><path d="M2 4h3v1h-3zM2 11h3v1h-3zM1 5h1v6h-1zM5 5h1v6h-1z" opacity=".85"/><path d="M1 4h1v1h-1zM5 4h1v1h-1zM1 11h1v1h-1zM5 11h1v1h-1z" opacity=".25"/><path d="M1.9 8.9L5.1 7.1" stroke="currentColor" stroke-width="1.1" opacity=".6"/></svg></span>21AA</span> <span class="b">8D 8C 24 14 <span class="ar zr"> <svg width="7" height="15"><path d="M2 4h3v1h-3zM2 11h3v1h-3zM1 5h1v6h-1zM5 5h1v6h-1z" opacity=".85"/><path d="M1 4h1v1h-1zM5 4h1v1h-1zM1 11h1v1h-1zM5 11h1v1h-1z" opacity=".25"/><path d="M1.9 8.9L5.1 7.1" stroke="currentColor" stroke-width="1.1" opacity=".6"/></svg></span>2 <span class="ar zr"> <svg width="7" height="15"><path d="M2 4h3v1h-3zM2 11h3v1h-3zM1 5h1v6h-1zM5 5h1v6h-1z" opacity=".85"/><path d="M1 4h1v1h-1zM5 4h1v1h-1zM1 11h1v1h-1zM5 11h1v1h-1z" opacity=".25"/><path d="M1.9 8.9L5.1 7.1" stroke="currentColor" stroke-width="1.1" opacity=".6"/></svg></span><span class="ar zr"> <svg width="7" height="15"><path d="M2 4h3v1h-3zM2 11h3v1h-3zM1 5h1v6h-1zM5 5h1v6h-1z" opacity=".85"/><path d="M1 4h1v1h-1zM5 4h1v1h-1zM1 11h1v1h-1zM5 11h1v1h-1z" opacity=".25"/><path d="M1.9 8.9L5.1 7.1" stroke="currentColor" stroke-width="1.1" opacity=".6"/></svg></span> <span class="ar zr"> <svg width="7" height="15"><path d="M2 4h3v1h-3zM2 11h3v1h-3zM1 5h1v6h-1zM5 5h1v6h-1z" opacity=".85"/><path d="M1 4h1v1h-1zM5 4h1v1h-1zM1 11h1v1h-1zM5 11h1v1h-1z" opacity=".25"/><path d="M1.9 8.9L5.1 7.1" stroke="currentColor" stroke-width="1.1" opacity=".6"/></svg></span><span class="ar zr"> <svg width="7" height="15"><path d="M2 4h3v1h-3zM2 11h3v1h-3zM1 5h1v6h-1zM5 5h1v6h-1z" opacity=".85"/><path d="M1 4h1v1h-1zM5 4h1v1h-1zM1 11h1v1h-1zM5 11h1v1h-1z" opacity=".25"/><path d="M1.9 8.9L5.1 7.1" stroke="currentColor" stroke-width="1.1" opacity=".6"/></svg></span></span>                    <span class="n">lea</span>     <span class="n">ecx, [esp+</span><span class="g">2424h+var<span class="u">_</span>221<span class="ar zr"> <svg width="7" height="15"><path d="M2 4h3v1h-3zM2 11h3v1h-3zM1 5h1v6h-1zM5 5h1v6h-1z" opacity=".85"/><path d="M1 4h1v1h-1zM5 4h1v1h-1zM1 11h1v1h-1zM5 11h1v1h-1z" opacity=".25"/><path d="M1.9 8.9L5.1 7.1" stroke="currentColor" stroke-width="1.1" opacity=".6"/></svg></span></span><span class="n">]</span></div>
<div class="r" style="top:198px"><span class="k">.text:<span class="ar zr"> <svg width="7" height="15"><path d="M2 4h3v1h-3zM2 11h3v1h-3zM1 5h1v6h-1zM5 5h1v6h-1z" opacity=".85"/><path d="M1 4h1v1h-1zM5 4h1v1h-1zM1 11h1v1h-1zM5 11h1v1h-1z" opacity=".25"/><path d="M1.9 8.9L5.1 7.1" stroke="currentColor" stroke-width="1.1" opacity=".6"/></svg></span><span class="ar zr"> <svg width="7" height="15"><path d="M2 4h3v1h-3zM2 11h3v1h-3zM1 5h1v6h-1zM5 5h1v6h-1z" opacity=".85"/><path d="M1 4h1v1h-1zM5 4h1v1h-1zM1 11h1v1h-1zM5 11h1v1h-1z" opacity=".25"/><path d="M1.9 8.9L5.1 7.1" stroke="currentColor" stroke-width="1.1" opacity=".6"/></svg></span>4<span class="ar zr"> <svg width="7" height="15"><path d="M2 4h3v1h-3zM2 11h3v1h-3zM1 5h1v6h-1zM5 5h1v6h-1z" opacity=".85"/><path d="M1 4h1v1h-1zM5 4h1v1h-1zM1 11h1v1h-1zM5 11h1v1h-1z" opacity=".25"/><path d="M1.9 8.9L5.1 7.1" stroke="currentColor" stroke-width="1.1" opacity=".6"/></svg></span>21B1</span> <span class="b">51</span>                                      <span class="n">push</span>    <span class="n">ecx</span></div>
<div class="r" style="top:213px"><span class="k">.text:<span class="ar zr"> <svg width="7" height="15"><path d="M2 4h3v1h-3zM2 11h3v1h-3zM1 5h1v6h-1zM5 5h1v6h-1z" opacity=".85"/><path d="M1 4h1v1h-1zM5 4h1v1h-1zM1 11h1v1h-1zM5 11h1v1h-1z" opacity=".25"/><path d="M1.9 8.9L5.1 7.1" stroke="currentColor" stroke-width="1.1" opacity=".6"/></svg></span><span class="ar zr"> <svg width="7" height="15"><path d="M2 4h3v1h-3zM2 11h3v1h-3zM1 5h1v6h-1zM5 5h1v6h-1z" opacity=".85"/><path d="M1 4h1v1h-1zM5 4h1v1h-1zM1 11h1v1h-1zM5 11h1v1h-1z" opacity=".25"/><path d="M1.9 8.9L5.1 7.1" stroke="currentColor" stroke-width="1.1" opacity=".6"/></svg></span>4<span class="ar zr"> <svg width="7" height="15"><path d="M2 4h3v1h-3zM2 11h3v1h-3zM1 5h1v6h-1zM5 5h1v6h-1z" opacity=".85"/><path d="M1 4h1v1h-1zM5 4h1v1h-1zM1 11h1v1h-1zM5 11h1v1h-1z" opacity=".25"/><path d="M1.9 8.9L5.1 7.1" stroke="currentColor" stroke-width="1.1" opacity=".6"/></svg></span>21B2</span> <span class="b">8D 4C 24 18</span>                             <span class="n">lea</span>     <span class="n">ecx, [esp+</span><span class="g">2428h+var<span class="u">_</span>241<span class="ar zr"> <svg width="7" height="15"><path d="M2 4h3v1h-3zM2 11h3v1h-3zM1 5h1v6h-1zM5 5h1v6h-1z" opacity=".85"/><path d="M1 4h1v1h-1zM5 4h1v1h-1zM1 11h1v1h-1zM5 11h1v1h-1z" opacity=".25"/><path d="M1.9 8.9L5.1 7.1" stroke="currentColor" stroke-width="1.1" opacity=".6"/></svg></span></span><span class="n">]</span></div>
<div class="r" style="top:228px"><span class="k">.text:<span class="ar zr"> <svg width="7" height="15"><path d="M2 4h3v1h-3zM2 11h3v1h-3zM1 5h1v6h-1zM5 5h1v6h-1z" opacity=".85"/><path d="M1 4h1v1h-1zM5 4h1v1h-1zM1 11h1v1h-1zM5 11h1v1h-1z" opacity=".25"/><path d="M1.9 8.9L5.1 7.1" stroke="currentColor" stroke-width="1.1" opacity=".6"/></svg></span><span class="ar zr"> <svg width="7" height="15"><path d="M2 4h3v1h-3zM2 11h3v1h-3zM1 5h1v6h-1zM5 5h1v6h-1z" opacity=".85"/><path d="M1 4h1v1h-1zM5 4h1v1h-1zM1 11h1v1h-1zM5 11h1v1h-1z" opacity=".25"/><path d="M1.9 8.9L5.1 7.1" stroke="currentColor" stroke-width="1.1" opacity=".6"/></svg></span>4<span class="ar zr"> <svg width="7" height="15"><path d="M2 4h3v1h-3zM2 11h3v1h-3zM1 5h1v6h-1zM5 5h1v6h-1z" opacity=".85"/><path d="M1 4h1v1h-1zM5 4h1v1h-1zM1 11h1v1h-1zM5 11h1v1h-1z" opacity=".25"/><path d="M1.9 8.9L5.1 7.1" stroke="currentColor" stroke-width="1.1" opacity=".6"/></svg></span>21B6</span> <span class="b">C6 84 24 2<span class="ar zr"> <svg width="7" height="15"><path d="M2 4h3v1h-3zM2 11h3v1h-3zM1 5h1v6h-1zM5 5h1v6h-1z" opacity=".85"/><path d="M1 4h1v1h-1zM5 4h1v1h-1zM1 11h1v1h-1zM5 11h1v1h-1z" opacity=".25"/><path d="M1.9 8.9L5.1 7.1" stroke="currentColor" stroke-width="1.1" opacity=".6"/></svg></span> 14 <span class="ar zr"> <svg width="7" height="15"><path d="M2 4h3v1h-3zM2 11h3v1h-3zM1 5h1v6h-1zM5 5h1v6h-1z" opacity=".85"/><path d="M1 4h1v1h-1zM5 4h1v1h-1zM1 11h1v1h-1zM5 11h1v1h-1z" opacity=".25"/><path d="M1.9 8.9L5.1 7.1" stroke="currentColor" stroke-width="1.1" opacity=".6"/></svg></span><span class="ar zr"> <svg width="7" height="15"><path d="M2 4h3v1h-3zM2 11h3v1h-3zM1 5h1v6h-1zM5 5h1v6h-1z" opacity=".85"/><path d="M1 4h1v1h-1zM5 4h1v1h-1zM1 11h1v1h-1zM5 11h1v1h-1z" opacity=".25"/><path d="M1.9 8.9L5.1 7.1" stroke="currentColor" stroke-width="1.1" opacity=".6"/></svg></span> <span class="ar zr"> <svg width="7" height="15"><path d="M2 4h3v1h-3zM2 11h3v1h-3zM1 5h1v6h-1zM5 5h1v6h-1z" opacity=".85"/><path d="M1 4h1v1h-1zM5 4h1v1h-1zM1 11h1v1h-1zM5 11h1v1h-1z" opacity=".25"/><path d="M1.9 8.9L5.1 7.1" stroke="currentColor" stroke-width="1.1" opacity=".6"/></svg></span><span class="ar zr"> <svg width="7" height="15"><path d="M2 4h3v1h-3zM2 11h3v1h-3zM1 5h1v6h-1zM5 5h1v6h-1z" opacity=".85"/><path d="M1 4h1v1h-1zM5 4h1v1h-1zM1 11h1v1h-1zM5 11h1v1h-1z" opacity=".25"/><path d="M1.9 8.9L5.1 7.1" stroke="currentColor" stroke-width="1.1" opacity=".6"/></svg></span> <span class="ar zr"> <svg width="7" height="15"><path d="M2 4h3v1h-3zM2 11h3v1h-3zM1 5h1v6h-1zM5 5h1v6h-1z" opacity=".85"/><path d="M1 4h1v1h-1zM5 4h1v1h-1zM1 11h1v1h-1zM5 11h1v1h-1z" opacity=".25"/><path d="M1.9 8.9L5.1 7.1" stroke="currentColor" stroke-width="1.1" opacity=".6"/></svg></span><span class="ar zr"> <svg width="7" height="15"><path d="M2 4h3v1h-3zM2 11h3v1h-3zM1 5h1v6h-1zM5 5h1v6h-1z" opacity=".85"/><path d="M1 4h1v1h-1zM5 4h1v1h-1zM1 11h1v1h-1zM5 11h1v1h-1z" opacity=".25"/><path d="M1.9 8.9L5.1 7.1" stroke="currentColor" stroke-width="1.1" opacity=".6"/></svg></span></span>                 <span class="n">mov</span>     <span class="n">[esp+</span><span class="g">2428h+var<span class="u">_</span>1<span class="ar zr"> <svg width="7" height="15"><path d="M2 4h3v1h-3zM2 11h3v1h-3zM1 5h1v6h-1zM5 5h1v6h-1z" opacity=".85"/><path d="M1 4h1v1h-1zM5 4h1v1h-1zM1 11h1v1h-1zM5 11h1v1h-1z" opacity=".25"/><path d="M1.9 8.9L5.1 7.1" stroke="currentColor" stroke-width="1.1" opacity=".6"/></svg></span><span class="ar zr"> <svg width="7" height="15"><path d="M2 4h3v1h-3zM2 11h3v1h-3zM1 5h1v6h-1zM5 5h1v6h-1z" opacity=".85"/><path d="M1 4h1v1h-1zM5 4h1v1h-1zM1 11h1v1h-1zM5 11h1v1h-1z" opacity=".25"/><path d="M1.9 8.9L5.1 7.1" stroke="currentColor" stroke-width="1.1" opacity=".6"/></svg></span>8</span><span class="n">], </span><span class="g"><span class="ar zr"> <svg width="7" height="15"><path d="M2 4h3v1h-3zM2 11h3v1h-3zM1 5h1v6h-1zM5 5h1v6h-1z" opacity=".85"/><path d="M1 4h1v1h-1zM5 4h1v1h-1zM1 11h1v1h-1zM5 11h1v1h-1z" opacity=".25"/><path d="M1.9 8.9L5.1 7.1" stroke="currentColor" stroke-width="1.1" opacity=".6"/></svg></span></span></div>
<div class="r" style="top:243px"><span class="k">.text:<span class="ar zr"> <svg width="7" height="15"><path d="M2 4h3v1h-3zM2 11h3v1h-3zM1 5h1v6h-1zM5 5h1v6h-1z" opacity=".85"/><path d="M1 4h1v1h-1zM5 4h1v1h-1zM1 11h1v1h-1zM5 11h1v1h-1z" opacity=".25"/><path d="M1.9 8.9L5.1 7.1" stroke="currentColor" stroke-width="1.1" opacity=".6"/></svg></span><span class="ar zr"> <svg width="7" height="15"><path d="M2 4h3v1h-3zM2 11h3v1h-3zM1 5h1v6h-1zM5 5h1v6h-1z" opacity=".85"/><path d="M1 4h1v1h-1zM5 4h1v1h-1zM1 11h1v1h-1zM5 11h1v1h-1z" opacity=".25"/><path d="M1.9 8.9L5.1 7.1" stroke="currentColor" stroke-width="1.1" opacity=".6"/></svg></span>4<span class="ar zr"> <svg width="7" height="15"><path d="M2 4h3v1h-3zM2 11h3v1h-3zM1 5h1v6h-1zM5 5h1v6h-1z" opacity=".85"/><path d="M1 4h1v1h-1zM5 4h1v1h-1zM1 11h1v1h-1zM5 11h1v1h-1z" opacity=".25"/><path d="M1.9 8.9L5.1 7.1" stroke="currentColor" stroke-width="1.1" opacity=".6"/></svg></span>21BE</span> <span class="b">E8 <span class="ar zr"> <svg width="7" height="15"><path d="M2 4h3v1h-3zM2 11h3v1h-3zM1 5h1v6h-1zM5 5h1v6h-1z" opacity=".85"/><path d="M1 4h1v1h-1zM5 4h1v1h-1zM1 11h1v1h-1zM5 11h1v1h-1z" opacity=".25"/><path d="M1.9 8.9L5.1 7.1" stroke="currentColor" stroke-width="1.1" opacity=".6"/></svg></span>D <span class="ar zr"> <svg width="7" height="15"><path d="M2 4h3v1h-3zM2 11h3v1h-3zM1 5h1v6h-1zM5 5h1v6h-1z" opacity=".85"/><path d="M1 4h1v1h-1zM5 4h1v1h-1zM1 11h1v1h-1zM5 11h1v1h-1z" opacity=".25"/><path d="M1.9 8.9L5.1 7.1" stroke="currentColor" stroke-width="1.1" opacity=".6"/></svg></span>7 <span class="ar zr"> <svg width="7" height="15"><path d="M2 4h3v1h-3zM2 11h3v1h-3zM1 5h1v6h-1zM5 5h1v6h-1z" opacity=".85"/><path d="M1 4h1v1h-1zM5 4h1v1h-1zM1 11h1v1h-1zM5 11h1v1h-1z" opacity=".25"/><path d="M1.9 8.9L5.1 7.1" stroke="currentColor" stroke-width="1.1" opacity=".6"/></svg></span><span class="ar zr"> <svg width="7" height="15"><path d="M2 4h3v1h-3zM2 11h3v1h-3zM1 5h1v6h-1zM5 5h1v6h-1z" opacity=".85"/><path d="M1 4h1v1h-1zM5 4h1v1h-1zM1 11h1v1h-1zM5 11h1v1h-1z" opacity=".25"/><path d="M1.9 8.9L5.1 7.1" stroke="currentColor" stroke-width="1.1" opacity=".6"/></svg></span> <span class="ar zr"> <svg width="7" height="15"><path d="M2 4h3v1h-3zM2 11h3v1h-3zM1 5h1v6h-1zM5 5h1v6h-1z" opacity=".85"/><path d="M1 4h1v1h-1zM5 4h1v1h-1zM1 11h1v1h-1zM5 11h1v1h-1z" opacity=".25"/><path d="M1.9 8.9L5.1 7.1" stroke="currentColor" stroke-width="1.1" opacity=".6"/></svg></span><span class="ar zr"> <svg width="7" height="15"><path d="M2 4h3v1h-3zM2 11h3v1h-3zM1 5h1v6h-1zM5 5h1v6h-1z" opacity=".85"/><path d="M1 4h1v1h-1zM5 4h1v1h-1zM1 11h1v1h-1zM5 11h1v1h-1z" opacity=".25"/><path d="M1.9 8.9L5.1 7.1" stroke="currentColor" stroke-width="1.1" opacity=".6"/></svg></span></span>                          <span class="n">call</span>    <span class="b">ReName<span class="u">_</span>connect</span></div>
<div class="r" style="top:258px"><span class="k">.text:<span class="ar zr"> <svg width="7" height="15"><path d="M2 4h3v1h-3zM2 11h3v1h-3zM1 5h1v6h-1zM5 5h1v6h-1z" opacity=".85"/><path d="M1 4h1v1h-1zM5 4h1v1h-1zM1 11h1v1h-1zM5 11h1v1h-1z" opacity=".25"/><path d="M1.9 8.9L5.1 7.1" stroke="currentColor" stroke-width="1.1" opacity=".6"/></svg></span><span class="ar zr"> <svg width="7" height="15"><path d="M2 4h3v1h-3zM2 11h3v1h-3zM1 5h1v6h-1zM5 5h1v6h-1z" opacity=".85"/><path d="M1 4h1v1h-1zM5 4h1v1h-1zM1 11h1v1h-1zM5 11h1v1h-1z" opacity=".25"/><path d="M1.9 8.9L5.1 7.1" stroke="currentColor" stroke-width="1.1" opacity=".6"/></svg></span>4<span class="ar zr"> <svg width="7" height="15"><path d="M2 4h3v1h-3zM2 11h3v1h-3zM1 5h1v6h-1zM5 5h1v6h-1z" opacity=".85"/><path d="M1 4h1v1h-1zM5 4h1v1h-1zM1 11h1v1h-1zM5 11h1v1h-1z" opacity=".25"/><path d="M1.9 8.9L5.1 7.1" stroke="currentColor" stroke-width="1.1" opacity=".6"/></svg></span>21C3</span> <span class="b">83 C4 <span class="ar zr"> <svg width="7" height="15"><path d="M2 4h3v1h-3zM2 11h3v1h-3zM1 5h1v6h-1zM5 5h1v6h-1z" opacity=".85"/><path d="M1 4h1v1h-1zM5 4h1v1h-1zM1 11h1v1h-1zM5 11h1v1h-1z" opacity=".25"/><path d="M1.9 8.9L5.1 7.1" stroke="currentColor" stroke-width="1.1" opacity=".6"/></svg></span>8</span>                                <span class="n">add</span>     <span class="n">esp, </span><span class="g">8</span></div>
<div class="r" style="top:273px"><span class="k">.text:<span class="ar zr"> <svg width="7" height="15"><path d="M2 4h3v1h-3zM2 11h3v1h-3zM1 5h1v6h-1zM5 5h1v6h-1z" opacity=".85"/><path d="M1 4h1v1h-1zM5 4h1v1h-1zM1 11h1v1h-1zM5 11h1v1h-1z" opacity=".25"/><path d="M1.9 8.9L5.1 7.1" stroke="currentColor" stroke-width="1.1" opacity=".6"/></svg></span><span class="ar zr"> <svg width="7" height="15"><path d="M2 4h3v1h-3zM2 11h3v1h-3zM1 5h1v6h-1zM5 5h1v6h-1z" opacity=".85"/><path d="M1 4h1v1h-1zM5 4h1v1h-1zM1 11h1v1h-1zM5 11h1v1h-1z" opacity=".25"/><path d="M1.9 8.9L5.1 7.1" stroke="currentColor" stroke-width="1.1" opacity=".6"/></svg></span>4<span class="ar zr"> <svg width="7" height="15"><path d="M2 4h3v1h-3zM2 11h3v1h-3zM1 5h1v6h-1zM5 5h1v6h-1z" opacity=".85"/><path d="M1 4h1v1h-1zM5 4h1v1h-1zM1 11h1v1h-1zM5 11h1v1h-1z" opacity=".25"/><path d="M1.9 8.9L5.1 7.1" stroke="currentColor" stroke-width="1.1" opacity=".6"/></svg></span>21C6</span> <span class="b">8B C8</span>                                   <span class="n">mov</span>     <span class="n">ecx, eax</span></div>
<div class="r" style="top:288px"><span class="k">.text:<span class="ar zr"> <svg width="7" height="15"><path d="M2 4h3v1h-3zM2 11h3v1h-3zM1 5h1v6h-1zM5 5h1v6h-1z" opacity=".85"/><path d="M1 4h1v1h-1zM5 4h1v1h-1zM1 11h1v1h-1zM5 11h1v1h-1z" opacity=".25"/><path d="M1.9 8.9L5.1 7.1" stroke="currentColor" stroke-width="1.1" opacity=".6"/></svg></span><span class="ar zr"> <svg width="7" height="15"><path d="M2 4h3v1h-3zM2 11h3v1h-3zM1 5h1v6h-1zM5 5h1v6h-1z" opacity=".85"/><path d="M1 4h1v1h-1zM5 4h1v1h-1zM1 11h1v1h-1zM5 11h1v1h-1z" opacity=".25"/><path d="M1.9 8.9L5.1 7.1" stroke="currentColor" stroke-width="1.1" opacity=".6"/></svg></span>4<span class="ar zr"> <svg width="7" height="15"><path d="M2 4h3v1h-3zM2 11h3v1h-3zM1 5h1v6h-1zM5 5h1v6h-1z" opacity=".85"/><path d="M1 4h1v1h-1zM5 4h1v1h-1zM1 11h1v1h-1zM5 11h1v1h-1z" opacity=".25"/><path d="M1.9 8.9L5.1 7.1" stroke="currentColor" stroke-width="1.1" opacity=".6"/></svg></span>21C8</span></div>
<div class="r" style="top:303px"><span class="k">.text:<span class="ar zr"> <svg width="7" height="15"><path d="M2 4h3v1h-3zM2 11h3v1h-3zM1 5h1v6h-1zM5 5h1v6h-1z" opacity=".85"/><path d="M1 4h1v1h-1zM5 4h1v1h-1zM1 11h1v1h-1zM5 11h1v1h-1z" opacity=".25"/><path d="M1.9 8.9L5.1 7.1" stroke="currentColor" stroke-width="1.1" opacity=".6"/></svg></span><span class="ar zr"> <svg width="7" height="15"><path d="M2 4h3v1h-3zM2 11h3v1h-3zM1 5h1v6h-1zM5 5h1v6h-1z" opacity=".85"/><path d="M1 4h1v1h-1zM5 4h1v1h-1zM1 11h1v1h-1zM5 11h1v1h-1z" opacity=".25"/><path d="M1.9 8.9L5.1 7.1" stroke="currentColor" stroke-width="1.1" opacity=".6"/></svg></span>4<span class="ar zr"> <svg width="7" height="15"><path d="M2 4h3v1h-3zM2 11h3v1h-3zM1 5h1v6h-1zM5 5h1v6h-1z" opacity=".85"/><path d="M1 4h1v1h-1zM5 4h1v1h-1zM1 11h1v1h-1zM5 11h1v1h-1z" opacity=".25"/><path d="M1.9 8.9L5.1 7.1" stroke="currentColor" stroke-width="1.1" opacity=".6"/></svg></span>21C8</span>                         <span class="n">loc<span class="u">_</span>4<span class="ar zr"> <svg width="7" height="15"><path d="M2 4h3v1h-3zM2 11h3v1h-3zM1 5h1v6h-1zM5 5h1v6h-1z" opacity=".85"/><path d="M1 4h1v1h-1zM5 4h1v1h-1zM1 11h1v1h-1zM5 11h1v1h-1z" opacity=".25"/><path d="M1.9 8.9L5.1 7.1" stroke="currentColor" stroke-width="1.1" opacity=".6"/></svg></span>21C8:</span>                             <span class="g">; CODE XREF: sub<span class="u">_</span>4<span class="ar zr"> <svg width="7" height="15"><path d="M2 4h3v1h-3zM2 11h3v1h-3zM1 5h1v6h-1zM5 5h1v6h-1z" opacity=".85"/><path d="M1 4h1v1h-1zM5 4h1v1h-1zM1 11h1v1h-1zM5 11h1v1h-1z" opacity=".25"/><path d="M1.9 8.9L5.1 7.1" stroke="currentColor" stroke-width="1.1" opacity=".6"/></svg></span>1B4<span class="ar zr"> <svg width="7" height="15"><path d="M2 4h3v1h-3zM2 11h3v1h-3zM1 5h1v6h-1zM5 5h1v6h-1z" opacity=".85"/><path d="M1 4h1v1h-1zM5 4h1v1h-1zM1 11h1v1h-1zM5 11h1v1h-1z" opacity=".25"/><path d="M1.9 8.9L5.1 7.1" stroke="currentColor" stroke-width="1.1" opacity=".6"/></svg></span>+68D<span class="ar"> <svg width="7" height="15" viewBox="0 0 7 15"><path d="M3.5 3V11.5M1.2 8.2L3.5 10.8L5.8 8.2" stroke="currentColor" stroke-width="1" fill="none" opacity=".8"/></svg></span>j</span></div>
<div class="r" style="top:318px"><span class="k">.text:<span class="ar zr"> <svg width="7" height="15"><path d="M2 4h3v1h-3zM2 11h3v1h-3zM1 5h1v6h-1zM5 5h1v6h-1z" opacity=".85"/><path d="M1 4h1v1h-1zM5 4h1v1h-1zM1 11h1v1h-1zM5 11h1v1h-1z" opacity=".25"/><path d="M1.9 8.9L5.1 7.1" stroke="currentColor" stroke-width="1.1" opacity=".6"/></svg></span><span class="ar zr"> <svg width="7" height="15"><path d="M2 4h3v1h-3zM2 11h3v1h-3zM1 5h1v6h-1zM5 5h1v6h-1z" opacity=".85"/><path d="M1 4h1v1h-1zM5 4h1v1h-1zM1 11h1v1h-1zM5 11h1v1h-1z" opacity=".25"/><path d="M1.9 8.9L5.1 7.1" stroke="currentColor" stroke-width="1.1" opacity=".6"/></svg></span>4<span class="ar zr"> <svg width="7" height="15"><path d="M2 4h3v1h-3zM2 11h3v1h-3zM1 5h1v6h-1zM5 5h1v6h-1z" opacity=".85"/><path d="M1 4h1v1h-1zM5 4h1v1h-1zM1 11h1v1h-1zM5 11h1v1h-1z" opacity=".25"/><path d="M1.9 8.9L5.1 7.1" stroke="currentColor" stroke-width="1.1" opacity=".6"/></svg></span>21C8</span> <span class="b">8A 1<span class="ar zr"> <svg width="7" height="15"><path d="M2 4h3v1h-3zM2 11h3v1h-3zM1 5h1v6h-1zM5 5h1v6h-1z" opacity=".85"/><path d="M1 4h1v1h-1zM5 4h1v1h-1zM1 11h1v1h-1zM5 11h1v1h-1z" opacity=".25"/><path d="M1.9 8.9L5.1 7.1" stroke="currentColor" stroke-width="1.1" opacity=".6"/></svg></span></span>                                   <span class="n">mov</span>     <span class="n">dl, [eax]</span></div>
<div class="r" style="top:333px"><span class="k">.text:<span class="ar zr"> <svg width="7" height="15"><path d="M2 4h3v1h-3zM2 11h3v1h-3zM1 5h1v6h-1zM5 5h1v6h-1z" opacity=".85"/><path d="M1 4h1v1h-1zM5 4h1v1h-1zM1 11h1v1h-1zM5 11h1v1h-1z" opacity=".25"/><path d="M1.9 8.9L5.1 7.1" stroke="currentColor" stroke-width="1.1" opacity=".6"/></svg></span><span class="ar zr"> <svg width="7" height="15"><path d="M2 4h3v1h-3zM2 11h3v1h-3zM1 5h1v6h-1zM5 5h1v6h-1z" opacity=".85"/><path d="M1 4h1v1h-1zM5 4h1v1h-1zM1 11h1v1h-1zM5 11h1v1h-1z" opacity=".25"/><path d="M1.9 8.9L5.1 7.1" stroke="currentColor" stroke-width="1.1" opacity=".6"/></svg></span>4<span class="ar zr"> <svg width="7" height="15"><path d="M2 4h3v1h-3zM2 11h3v1h-3zM1 5h1v6h-1zM5 5h1v6h-1z" opacity=".85"/><path d="M1 4h1v1h-1zM5 4h1v1h-1zM1 11h1v1h-1zM5 11h1v1h-1z" opacity=".25"/><path d="M1.9 8.9L5.1 7.1" stroke="currentColor" stroke-width="1.1" opacity=".6"/></svg></span>21CA</span> <span class="b">4<span class="ar zr"> <svg width="7" height="15"><path d="M2 4h3v1h-3zM2 11h3v1h-3zM1 5h1v6h-1zM5 5h1v6h-1z" opacity=".85"/><path d="M1 4h1v1h-1zM5 4h1v1h-1zM1 11h1v1h-1zM5 11h1v1h-1z" opacity=".25"/><path d="M1.9 8.9L5.1 7.1" stroke="currentColor" stroke-width="1.1" opacity=".6"/></svg></span></span>                                      <span class="n">inc</span>     <span class="n">eax</span></div>
<div class="r" style="top:348px"><span class="k">.text:<span class="ar zr"> <svg width="7" height="15"><path d="M2 4h3v1h-3zM2 11h3v1h-3zM1 5h1v6h-1zM5 5h1v6h-1z" opacity=".85"/><path d="M1 4h1v1h-1zM5 4h1v1h-1zM1 11h1v1h-1zM5 11h1v1h-1z" opacity=".25"/><path d="M1.9 8.9L5.1 7.1" stroke="currentColor" stroke-width="1.1" opacity=".6"/></svg></span><span class="ar zr"> <svg width="7" height="15"><path d="M2 4h3v1h-3zM2 11h3v1h-3zM1 5h1v6h-1zM5 5h1v6h-1z" opacity=".85"/><path d="M1 4h1v1h-1zM5 4h1v1h-1zM1 11h1v1h-1zM5 11h1v1h-1z" opacity=".25"/><path d="M1.9 8.9L5.1 7.1" stroke="currentColor" stroke-width="1.1" opacity=".6"/></svg></span>4<span class="ar zr"> <svg width="7" height="15"><path d="M2 4h3v1h-3zM2 11h3v1h-3zM1 5h1v6h-1zM5 5h1v6h-1z" opacity=".85"/><path d="M1 4h1v1h-1zM5 4h1v1h-1zM1 11h1v1h-1zM5 11h1v1h-1z" opacity=".25"/><path d="M1.9 8.9L5.1 7.1" stroke="currentColor" stroke-width="1.1" opacity=".6"/></svg></span>21CB</span> <span class="b">84 D2</span>                                   <span class="n">test</span>    <span class="n">dl, dl</span></div>
<div class="r" style="top:363px"><span class="k">.text:<span class="ar zr"> <svg width="7" height="15"><path d="M2 4h3v1h-3zM2 11h3v1h-3zM1 5h1v6h-1zM5 5h1v6h-1z" opacity=".85"/><path d="M1 4h1v1h-1zM5 4h1v1h-1zM1 11h1v1h-1zM5 11h1v1h-1z" opacity=".25"/><path d="M1.9 8.9L5.1 7.1" stroke="currentColor" stroke-width="1.1" opacity=".6"/></svg></span><span class="ar zr"> <svg width="7" height="15"><path d="M2 4h3v1h-3zM2 11h3v1h-3zM1 5h1v6h-1zM5 5h1v6h-1z" opacity=".85"/><path d="M1 4h1v1h-1zM5 4h1v1h-1zM1 11h1v1h-1zM5 11h1v1h-1z" opacity=".25"/><path d="M1.9 8.9L5.1 7.1" stroke="currentColor" stroke-width="1.1" opacity=".6"/></svg></span>4<span class="ar zr"> <svg width="7" height="15"><path d="M2 4h3v1h-3zM2 11h3v1h-3zM1 5h1v6h-1zM5 5h1v6h-1z" opacity=".85"/><path d="M1 4h1v1h-1zM5 4h1v1h-1zM1 11h1v1h-1zM5 11h1v1h-1z" opacity=".25"/><path d="M1.9 8.9L5.1 7.1" stroke="currentColor" stroke-width="1.1" opacity=".6"/></svg></span>21CD</span> <span class="b">75 F9</span>                                   <span class="n">jnz</span>     <span class="n">short loc<span class="u">_</span>4<span class="ar zr"> <svg width="7" height="15"><path d="M2 4h3v1h-3zM2 11h3v1h-3zM1 5h1v6h-1zM5 5h1v6h-1z" opacity=".85"/><path d="M1 4h1v1h-1zM5 4h1v1h-1zM1 11h1v1h-1zM5 11h1v1h-1z" opacity=".25"/><path d="M1.9 8.9L5.1 7.1" stroke="currentColor" stroke-width="1.1" opacity=".6"/></svg></span>21C8</span></div>
<div class="r" style="top:378px"><span class="k">.text:<span class="ar zr"> <svg width="7" height="15"><path d="M2 4h3v1h-3zM2 11h3v1h-3zM1 5h1v6h-1zM5 5h1v6h-1z" opacity=".85"/><path d="M1 4h1v1h-1zM5 4h1v1h-1zM1 11h1v1h-1zM5 11h1v1h-1z" opacity=".25"/><path d="M1.9 8.9L5.1 7.1" stroke="currentColor" stroke-width="1.1" opacity=".6"/></svg></span><span class="ar zr"> <svg width="7" height="15"><path d="M2 4h3v1h-3zM2 11h3v1h-3zM1 5h1v6h-1zM5 5h1v6h-1z" opacity=".85"/><path d="M1 4h1v1h-1zM5 4h1v1h-1zM1 11h1v1h-1zM5 11h1v1h-1z" opacity=".25"/><path d="M1.9 8.9L5.1 7.1" stroke="currentColor" stroke-width="1.1" opacity=".6"/></svg></span>4<span class="ar zr"> <svg width="7" height="15"><path d="M2 4h3v1h-3zM2 11h3v1h-3zM1 5h1v6h-1zM5 5h1v6h-1z" opacity=".85"/><path d="M1 4h1v1h-1zM5 4h1v1h-1zM1 11h1v1h-1zM5 11h1v1h-1z" opacity=".25"/><path d="M1.9 8.9L5.1 7.1" stroke="currentColor" stroke-width="1.1" opacity=".6"/></svg></span>21CF</span> <span class="b">8D BC 24 18 14 <span class="ar zr"> <svg width="7" height="15"><path d="M2 4h3v1h-3zM2 11h3v1h-3zM1 5h1v6h-1zM5 5h1v6h-1z" opacity=".85"/><path d="M1 4h1v1h-1zM5 4h1v1h-1zM1 11h1v1h-1zM5 11h1v1h-1z" opacity=".25"/><path d="M1.9 8.9L5.1 7.1" stroke="currentColor" stroke-width="1.1" opacity=".6"/></svg></span><span class="ar zr"> <svg width="7" height="15"><path d="M2 4h3v1h-3zM2 11h3v1h-3zM1 5h1v6h-1zM5 5h1v6h-1z" opacity=".85"/><path d="M1 4h1v1h-1zM5 4h1v1h-1zM1 11h1v1h-1zM5 11h1v1h-1z" opacity=".25"/><path d="M1.9 8.9L5.1 7.1" stroke="currentColor" stroke-width="1.1" opacity=".6"/></svg></span> <span class="ar zr"> <svg width="7" height="15"><path d="M2 4h3v1h-3zM2 11h3v1h-3zM1 5h1v6h-1zM5 5h1v6h-1z" opacity=".85"/><path d="M1 4h1v1h-1zM5 4h1v1h-1zM1 11h1v1h-1zM5 11h1v1h-1z" opacity=".25"/><path d="M1.9 8.9L5.1 7.1" stroke="currentColor" stroke-width="1.1" opacity=".6"/></svg></span><span class="ar zr"> <svg width="7" height="15"><path d="M2 4h3v1h-3zM2 11h3v1h-3zM1 5h1v6h-1zM5 5h1v6h-1z" opacity=".85"/><path d="M1 4h1v1h-1zM5 4h1v1h-1zM1 11h1v1h-1zM5 11h1v1h-1z" opacity=".25"/><path d="M1.9 8.9L5.1 7.1" stroke="currentColor" stroke-width="1.1" opacity=".6"/></svg></span></span>                    <span class="n">lea</span>     <span class="n">edi, [esp+</span><span class="g">242<span class="ar zr"> <svg width="7" height="15"><path d="M2 4h3v1h-3zM2 11h3v1h-3zM1 5h1v6h-1zM5 5h1v6h-1z" opacity=".85"/><path d="M1 4h1v1h-1zM5 4h1v1h-1zM1 11h1v1h-1zM5 11h1v1h-1z" opacity=".25"/><path d="M1.9 8.9L5.1 7.1" stroke="currentColor" stroke-width="1.1" opacity=".6"/></svg></span>h+var<span class="u">_</span>1<span class="ar zr"> <svg width="7" height="15"><path d="M2 4h3v1h-3zM2 11h3v1h-3zM1 5h1v6h-1zM5 5h1v6h-1z" opacity=".85"/><path d="M1 4h1v1h-1zM5 4h1v1h-1zM1 11h1v1h-1zM5 11h1v1h-1z" opacity=".25"/><path d="M1.9 8.9L5.1 7.1" stroke="currentColor" stroke-width="1.1" opacity=".6"/></svg></span><span class="ar zr"> <svg width="7" height="15"><path d="M2 4h3v1h-3zM2 11h3v1h-3zM1 5h1v6h-1zM5 5h1v6h-1z" opacity=".85"/><path d="M1 4h1v1h-1zM5 4h1v1h-1zM1 11h1v1h-1zM5 11h1v1h-1z" opacity=".25"/><path d="M1.9 8.9L5.1 7.1" stroke="currentColor" stroke-width="1.1" opacity=".6"/></svg></span>8</span><span class="n">]</span></div>
<div class="r" style="top:393px"><span class="k">.text:<span class="ar zr"> <svg width="7" height="15"><path d="M2 4h3v1h-3zM2 11h3v1h-3zM1 5h1v6h-1zM5 5h1v6h-1z" opacity=".85"/><path d="M1 4h1v1h-1zM5 4h1v1h-1zM1 11h1v1h-1zM5 11h1v1h-1z" opacity=".25"/><path d="M1.9 8.9L5.1 7.1" stroke="currentColor" stroke-width="1.1" opacity=".6"/></svg></span><span class="ar zr"> <svg width="7" height="15"><path d="M2 4h3v1h-3zM2 11h3v1h-3zM1 5h1v6h-1zM5 5h1v6h-1z" opacity=".85"/><path d="M1 4h1v1h-1zM5 4h1v1h-1zM1 11h1v1h-1zM5 11h1v1h-1z" opacity=".25"/><path d="M1.9 8.9L5.1 7.1" stroke="currentColor" stroke-width="1.1" opacity=".6"/></svg></span>4<span class="ar zr"> <svg width="7" height="15"><path d="M2 4h3v1h-3zM2 11h3v1h-3zM1 5h1v6h-1zM5 5h1v6h-1z" opacity=".85"/><path d="M1 4h1v1h-1zM5 4h1v1h-1zM1 11h1v1h-1zM5 11h1v1h-1z" opacity=".25"/><path d="M1.9 8.9L5.1 7.1" stroke="currentColor" stroke-width="1.1" opacity=".6"/></svg></span>21D6</span> <span class="b">2B C1</span>                                   <span class="n">sub</span>     <span class="n">eax, ecx</span></div>
<div class="r" style="top:408px"><span class="k">.text:<span class="ar zr"> <svg width="7" height="15"><path d="M2 4h3v1h-3zM2 11h3v1h-3zM1 5h1v6h-1zM5 5h1v6h-1z" opacity=".85"/><path d="M1 4h1v1h-1zM5 4h1v1h-1zM1 11h1v1h-1zM5 11h1v1h-1z" opacity=".25"/><path d="M1.9 8.9L5.1 7.1" stroke="currentColor" stroke-width="1.1" opacity=".6"/></svg></span><span class="ar zr"> <svg width="7" height="15"><path d="M2 4h3v1h-3zM2 11h3v1h-3zM1 5h1v6h-1zM5 5h1v6h-1z" opacity=".85"/><path d="M1 4h1v1h-1zM5 4h1v1h-1zM1 11h1v1h-1zM5 11h1v1h-1z" opacity=".25"/><path d="M1.9 8.9L5.1 7.1" stroke="currentColor" stroke-width="1.1" opacity=".6"/></svg></span>4<span class="ar zr"> <svg width="7" height="15"><path d="M2 4h3v1h-3zM2 11h3v1h-3zM1 5h1v6h-1zM5 5h1v6h-1z" opacity=".85"/><path d="M1 4h1v1h-1zM5 4h1v1h-1zM1 11h1v1h-1zM5 11h1v1h-1z" opacity=".25"/><path d="M1.9 8.9L5.1 7.1" stroke="currentColor" stroke-width="1.1" opacity=".6"/></svg></span>21D8</span> <span class="b">8B F1</span>                                   <span class="n">mov</span>     <span class="n">esi, ecx</span></div>
<div class="r" style="top:423px"><span class="k">.text:<span class="ar zr"> <svg width="7" height="15"><path d="M2 4h3v1h-3zM2 11h3v1h-3zM1 5h1v6h-1zM5 5h1v6h-1z" opacity=".85"/><path d="M1 4h1v1h-1zM5 4h1v1h-1zM1 11h1v1h-1zM5 11h1v1h-1z" opacity=".25"/><path d="M1.9 8.9L5.1 7.1" stroke="currentColor" stroke-width="1.1" opacity=".6"/></svg></span><span class="ar zr"> <svg width="7" height="15"><path d="M2 4h3v1h-3zM2 11h3v1h-3zM1 5h1v6h-1zM5 5h1v6h-1z" opacity=".85"/><path d="M1 4h1v1h-1zM5 4h1v1h-1zM1 11h1v1h-1zM5 11h1v1h-1z" opacity=".25"/><path d="M1.9 8.9L5.1 7.1" stroke="currentColor" stroke-width="1.1" opacity=".6"/></svg></span>4<span class="ar zr"> <svg width="7" height="15"><path d="M2 4h3v1h-3zM2 11h3v1h-3zM1 5h1v6h-1zM5 5h1v6h-1z" opacity=".85"/><path d="M1 4h1v1h-1zM5 4h1v1h-1zM1 11h1v1h-1zM5 11h1v1h-1z" opacity=".25"/><path d="M1.9 8.9L5.1 7.1" stroke="currentColor" stroke-width="1.1" opacity=".6"/></svg></span>21DA</span> <span class="b">4F</span>                                      <span class="n">dec</span>     <span class="n">edi</span></div>
<div class="r" style="top:438px"><span class="k">.text:<span class="ar zr"> <svg width="7" height="15"><path d="M2 4h3v1h-3zM2 11h3v1h-3zM1 5h1v6h-1zM5 5h1v6h-1z" opacity=".85"/><path d="M1 4h1v1h-1zM5 4h1v1h-1zM1 11h1v1h-1zM5 11h1v1h-1z" opacity=".25"/><path d="M1.9 8.9L5.1 7.1" stroke="currentColor" stroke-width="1.1" opacity=".6"/></svg></span><span class="ar zr"> <svg width="7" height="15"><path d="M2 4h3v1h-3zM2 11h3v1h-3zM1 5h1v6h-1zM5 5h1v6h-1z" opacity=".85"/><path d="M1 4h1v1h-1zM5 4h1v1h-1zM1 11h1v1h-1zM5 11h1v1h-1z" opacity=".25"/><path d="M1.9 8.9L5.1 7.1" stroke="currentColor" stroke-width="1.1" opacity=".6"/></svg></span>4<span class="ar zr"> <svg width="7" height="15"><path d="M2 4h3v1h-3zM2 11h3v1h-3zM1 5h1v6h-1zM5 5h1v6h-1z" opacity=".85"/><path d="M1 4h1v1h-1zM5 4h1v1h-1zM1 11h1v1h-1zM5 11h1v1h-1z" opacity=".25"/><path d="M1.9 8.9L5.1 7.1" stroke="currentColor" stroke-width="1.1" opacity=".6"/></svg></span>21DB</span> <span class="b">EB <span class="ar zr"> <svg width="7" height="15"><path d="M2 4h3v1h-3zM2 11h3v1h-3zM1 5h1v6h-1zM5 5h1v6h-1z" opacity=".85"/><path d="M1 4h1v1h-1zM5 4h1v1h-1zM1 11h1v1h-1zM5 11h1v1h-1z" opacity=".25"/><path d="M1.9 8.9L5.1 7.1" stroke="currentColor" stroke-width="1.1" opacity=".6"/></svg></span>3</span>                                   <span class="n">jmp</span>     <span class="n">short loc<span class="u">_</span>4<span class="ar zr"> <svg width="7" height="15"><path d="M2 4h3v1h-3zM2 11h3v1h-3zM1 5h1v6h-1zM5 5h1v6h-1z" opacity=".85"/><path d="M1 4h1v1h-1zM5 4h1v1h-1zM1 11h1v1h-1zM5 11h1v1h-1z" opacity=".25"/><path d="M1.9 8.9L5.1 7.1" stroke="currentColor" stroke-width="1.1" opacity=".6"/></svg></span>21E<span class="ar zr"> <svg width="7" height="15"><path d="M2 4h3v1h-3zM2 11h3v1h-3zM1 5h1v6h-1zM5 5h1v6h-1z" opacity=".85"/><path d="M1 4h1v1h-1zM5 4h1v1h-1zM1 11h1v1h-1zM5 11h1v1h-1z" opacity=".25"/><path d="M1.9 8.9L5.1 7.1" stroke="currentColor" stroke-width="1.1" opacity=".6"/></svg></span></span></div>
<div class="r" style="top:453px"><span class="k">.text:<span class="ar zr"> <svg width="7" height="15"><path d="M2 4h3v1h-3zM2 11h3v1h-3zM1 5h1v6h-1zM5 5h1v6h-1z" opacity=".85"/><path d="M1 4h1v1h-1zM5 4h1v1h-1zM1 11h1v1h-1zM5 11h1v1h-1z" opacity=".25"/><path d="M1.9 8.9L5.1 7.1" stroke="currentColor" stroke-width="1.1" opacity=".6"/></svg></span><span class="ar zr"> <svg width="7" height="15"><path d="M2 4h3v1h-3zM2 11h3v1h-3zM1 5h1v6h-1zM5 5h1v6h-1z" opacity=".85"/><path d="M1 4h1v1h-1zM5 4h1v1h-1zM1 11h1v1h-1zM5 11h1v1h-1z" opacity=".25"/><path d="M1.9 8.9L5.1 7.1" stroke="currentColor" stroke-width="1.1" opacity=".6"/></svg></span>4<span class="ar zr"> <svg width="7" height="15"><path d="M2 4h3v1h-3zM2 11h3v1h-3zM1 5h1v6h-1zM5 5h1v6h-1z" opacity=".85"/><path d="M1 4h1v1h-1zM5 4h1v1h-1zM1 11h1v1h-1zM5 11h1v1h-1z" opacity=".25"/><path d="M1.9 8.9L5.1 7.1" stroke="currentColor" stroke-width="1.1" opacity=".6"/></svg></span>21DB</span>                         <span class="gr">;</span></div>
<div class="r" style="top:468px"><span class="gr">.text:<span class="ar zr"> <svg width="7" height="15"><path d="M2 4h3v1h-3zM2 11h3v1h-3zM1 5h1v6h-1zM5 5h1v6h-1z" opacity=".85"/><path d="M1 4h1v1h-1zM5 4h1v1h-1zM1 11h1v1h-1zM5 11h1v1h-1z" opacity=".25"/><path d="M1.9 8.9L5.1 7.1" stroke="currentColor" stroke-width="1.1" opacity=".6"/></svg></span><span class="ar zr"> <svg width="7" height="15"><path d="M2 4h3v1h-3zM2 11h3v1h-3zM1 5h1v6h-1zM5 5h1v6h-1z" opacity=".85"/><path d="M1 4h1v1h-1zM5 4h1v1h-1zM1 11h1v1h-1zM5 11h1v1h-1z" opacity=".25"/><path d="M1.9 8.9L5.1 7.1" stroke="currentColor" stroke-width="1.1" opacity=".6"/></svg></span>4<span class="ar zr"> <svg width="7" height="15"><path d="M2 4h3v1h-3zM2 11h3v1h-3zM1 5h1v6h-1zM5 5h1v6h-1z" opacity=".85"/><path d="M1 4h1v1h-1zM5 4h1v1h-1zM1 11h1v1h-1zM5 11h1v1h-1z" opacity=".25"/><path d="M1.9 8.9L5.1 7.1" stroke="currentColor" stroke-width="1.1" opacity=".6"/></svg></span>21DD</span> <span class="b">8D 49 <span class="ar zr"> <svg width="7" height="15"><path d="M2 4h3v1h-3zM2 11h3v1h-3zM1 5h1v6h-1zM5 5h1v6h-1z" opacity=".85"/><path d="M1 4h1v1h-1zM5 4h1v1h-1zM1 11h1v1h-1zM5 11h1v1h-1z" opacity=".25"/><path d="M1.9 8.9L5.1 7.1" stroke="currentColor" stroke-width="1.1" opacity=".6"/></svg></span><span class="ar zr"> <svg width="7" height="15"><path d="M2 4h3v1h-3zM2 11h3v1h-3zM1 5h1v6h-1zM5 5h1v6h-1z" opacity=".85"/><path d="M1 4h1v1h-1zM5 4h1v1h-1zM1 11h1v1h-1zM5 11h1v1h-1z" opacity=".25"/><path d="M1.9 8.9L5.1 7.1" stroke="currentColor" stroke-width="1.1" opacity=".6"/></svg></span></span>                                <span class="n">align</span> <span class="g">1<span class="ar zr"> <svg width="7" height="15"><path d="M2 4h3v1h-3zM2 11h3v1h-3zM1 5h1v6h-1zM5 5h1v6h-1z" opacity=".85"/><path d="M1 4h1v1h-1zM5 4h1v1h-1zM1 11h1v1h-1zM5 11h1v1h-1z" opacity=".25"/><path d="M1.9 8.9L5.1 7.1" stroke="currentColor" stroke-width="1.1" opacity=".6"/></svg></span>h</span></div>
<div class="r" style="top:483px"><span class="k">.text:<span class="ar zr"> <svg width="7" height="15"><path d="M2 4h3v1h-3zM2 11h3v1h-3zM1 5h1v6h-1zM5 5h1v6h-1z" opacity=".85"/><path d="M1 4h1v1h-1zM5 4h1v1h-1zM1 11h1v1h-1zM5 11h1v1h-1z" opacity=".25"/><path d="M1.9 8.9L5.1 7.1" stroke="currentColor" stroke-width="1.1" opacity=".6"/></svg></span><span class="ar zr"> <svg width="7" height="15"><path d="M2 4h3v1h-3zM2 11h3v1h-3zM1 5h1v6h-1zM5 5h1v6h-1z" opacity=".85"/><path d="M1 4h1v1h-1zM5 4h1v1h-1zM1 11h1v1h-1zM5 11h1v1h-1z" opacity=".25"/><path d="M1.9 8.9L5.1 7.1" stroke="currentColor" stroke-width="1.1" opacity=".6"/></svg></span>4<span class="ar zr"> <svg width="7" height="15"><path d="M2 4h3v1h-3zM2 11h3v1h-3zM1 5h1v6h-1zM5 5h1v6h-1z" opacity=".85"/><path d="M1 4h1v1h-1zM5 4h1v1h-1zM1 11h1v1h-1zM5 11h1v1h-1z" opacity=".25"/><path d="M1.9 8.9L5.1 7.1" stroke="currentColor" stroke-width="1.1" opacity=".6"/></svg></span>21E<span class="ar zr"> <svg width="7" height="15"><path d="M2 4h3v1h-3zM2 11h3v1h-3zM1 5h1v6h-1zM5 5h1v6h-1z" opacity=".85"/><path d="M1 4h1v1h-1zM5 4h1v1h-1zM1 11h1v1h-1zM5 11h1v1h-1z" opacity=".25"/><path d="M1.9 8.9L5.1 7.1" stroke="currentColor" stroke-width="1.1" opacity=".6"/></svg></span></span></div>
<div class="r" style="top:498px"><span class="k">.text:<span class="ar zr"> <svg width="7" height="15"><path d="M2 4h3v1h-3zM2 11h3v1h-3zM1 5h1v6h-1zM5 5h1v6h-1z" opacity=".85"/><path d="M1 4h1v1h-1zM5 4h1v1h-1zM1 11h1v1h-1zM5 11h1v1h-1z" opacity=".25"/><path d="M1.9 8.9L5.1 7.1" stroke="currentColor" stroke-width="1.1" opacity=".6"/></svg></span><span class="ar zr"> <svg width="7" height="15"><path d="M2 4h3v1h-3zM2 11h3v1h-3zM1 5h1v6h-1zM5 5h1v6h-1z" opacity=".85"/><path d="M1 4h1v1h-1zM5 4h1v1h-1zM1 11h1v1h-1zM5 11h1v1h-1z" opacity=".25"/><path d="M1.9 8.9L5.1 7.1" stroke="currentColor" stroke-width="1.1" opacity=".6"/></svg></span>4<span class="ar zr"> <svg width="7" height="15"><path d="M2 4h3v1h-3zM2 11h3v1h-3zM1 5h1v6h-1zM5 5h1v6h-1z" opacity=".85"/><path d="M1 4h1v1h-1zM5 4h1v1h-1zM1 11h1v1h-1zM5 11h1v1h-1z" opacity=".25"/><path d="M1.9 8.9L5.1 7.1" stroke="currentColor" stroke-width="1.1" opacity=".6"/></svg></span>21E<span class="ar zr"> <svg width="7" height="15"><path d="M2 4h3v1h-3zM2 11h3v1h-3zM1 5h1v6h-1zM5 5h1v6h-1z" opacity=".85"/><path d="M1 4h1v1h-1zM5 4h1v1h-1zM1 11h1v1h-1zM5 11h1v1h-1z" opacity=".25"/><path d="M1.9 8.9L5.1 7.1" stroke="currentColor" stroke-width="1.1" opacity=".6"/></svg></span></span>                         <span class="n">loc<span class="u">_</span>4<span class="ar zr"> <svg width="7" height="15"><path d="M2 4h3v1h-3zM2 11h3v1h-3zM1 5h1v6h-1zM5 5h1v6h-1z" opacity=".85"/><path d="M1 4h1v1h-1zM5 4h1v1h-1zM1 11h1v1h-1zM5 11h1v1h-1z" opacity=".25"/><path d="M1.9 8.9L5.1 7.1" stroke="currentColor" stroke-width="1.1" opacity=".6"/></svg></span>21E<span class="ar zr"> <svg width="7" height="15"><path d="M2 4h3v1h-3zM2 11h3v1h-3zM1 5h1v6h-1zM5 5h1v6h-1z" opacity=".85"/><path d="M1 4h1v1h-1zM5 4h1v1h-1zM1 11h1v1h-1zM5 11h1v1h-1z" opacity=".25"/><path d="M1.9 8.9L5.1 7.1" stroke="currentColor" stroke-width="1.1" opacity=".6"/></svg></span>:</span>                             <span class="g">; CODE XREF: sub<span class="u">_</span>4<span class="ar zr"> <svg width="7" height="15"><path d="M2 4h3v1h-3zM2 11h3v1h-3zM1 5h1v6h-1zM5 5h1v6h-1z" opacity=".85"/><path d="M1 4h1v1h-1zM5 4h1v1h-1zM1 11h1v1h-1zM5 11h1v1h-1z" opacity=".25"/><path d="M1.9 8.9L5.1 7.1" stroke="currentColor" stroke-width="1.1" opacity=".6"/></svg></span>1B4<span class="ar zr"> <svg width="7" height="15"><path d="M2 4h3v1h-3zM2 11h3v1h-3zM1 5h1v6h-1zM5 5h1v6h-1z" opacity=".85"/><path d="M1 4h1v1h-1zM5 4h1v1h-1zM1 11h1v1h-1zM5 11h1v1h-1z" opacity=".25"/><path d="M1.9 8.9L5.1 7.1" stroke="currentColor" stroke-width="1.1" opacity=".6"/></svg></span>+69B<span class="ar"> <svg width="7" height="15" viewBox="0 0 7 15"><path d="M3.5 12V3.5M1.2 6.8L3.5 4.2L5.8 6.8" stroke="currentColor" stroke-width="1" fill="none" opacity=".8"/></svg></span>j</span></div>
<div class="r" style="top:513px"><span class="k">.text:<span class="ar zr"> <svg width="7" height="15"><path d="M2 4h3v1h-3zM2 11h3v1h-3zM1 5h1v6h-1zM5 5h1v6h-1z" opacity=".85"/><path d="M1 4h1v1h-1zM5 4h1v1h-1zM1 11h1v1h-1zM5 11h1v1h-1z" opacity=".25"/><path d="M1.9 8.9L5.1 7.1" stroke="currentColor" stroke-width="1.1" opacity=".6"/></svg></span><span class="ar zr"> <svg width="7" height="15"><path d="M2 4h3v1h-3zM2 11h3v1h-3zM1 5h1v6h-1zM5 5h1v6h-1z" opacity=".85"/><path d="M1 4h1v1h-1zM5 4h1v1h-1zM1 11h1v1h-1zM5 11h1v1h-1z" opacity=".25"/><path d="M1.9 8.9L5.1 7.1" stroke="currentColor" stroke-width="1.1" opacity=".6"/></svg></span>4<span class="ar zr"> <svg width="7" height="15"><path d="M2 4h3v1h-3zM2 11h3v1h-3zM1 5h1v6h-1zM5 5h1v6h-1z" opacity=".85"/><path d="M1 4h1v1h-1zM5 4h1v1h-1zM1 11h1v1h-1zM5 11h1v1h-1z" opacity=".25"/><path d="M1.9 8.9L5.1 7.1" stroke="currentColor" stroke-width="1.1" opacity=".6"/></svg></span>21E<span class="ar zr"> <svg width="7" height="15"><path d="M2 4h3v1h-3zM2 11h3v1h-3zM1 5h1v6h-1zM5 5h1v6h-1z" opacity=".85"/><path d="M1 4h1v1h-1zM5 4h1v1h-1zM1 11h1v1h-1zM5 11h1v1h-1z" opacity=".25"/><path d="M1.9 8.9L5.1 7.1" stroke="currentColor" stroke-width="1.1" opacity=".6"/></svg></span></span>                                                                 <span class="g">; sub<span class="u">_</span>4<span class="ar zr"> <svg width="7" height="15"><path d="M2 4h3v1h-3zM2 11h3v1h-3zM1 5h1v6h-1zM5 5h1v6h-1z" opacity=".85"/><path d="M1 4h1v1h-1zM5 4h1v1h-1zM1 11h1v1h-1zM5 11h1v1h-1z" opacity=".25"/><path d="M1.9 8.9L5.1 7.1" stroke="currentColor" stroke-width="1.1" opacity=".6"/></svg></span>1B4<span class="ar zr"> <svg width="7" height="15"><path d="M2 4h3v1h-3zM2 11h3v1h-3zM1 5h1v6h-1zM5 5h1v6h-1z" opacity=".85"/><path d="M1 4h1v1h-1zM5 4h1v1h-1zM1 11h1v1h-1zM5 11h1v1h-1z" opacity=".25"/><path d="M1.9 8.9L5.1 7.1" stroke="currentColor" stroke-width="1.1" opacity=".6"/></svg></span>+6A6<span class="ar"> <svg width="7" height="15" viewBox="0 0 7 15"><path d="M3.5 3V11.5M1.2 8.2L3.5 10.8L5.8 8.2" stroke="currentColor" stroke-width="1" fill="none" opacity=".8"/></svg></span>j</span></div>
<div class="r" style="top:528px"><span class="k">.text:<span class="ar zr"> <svg width="7" height="15"><path d="M2 4h3v1h-3zM2 11h3v1h-3zM1 5h1v6h-1zM5 5h1v6h-1z" opacity=".85"/><path d="M1 4h1v1h-1zM5 4h1v1h-1zM1 11h1v1h-1zM5 11h1v1h-1z" opacity=".25"/><path d="M1.9 8.9L5.1 7.1" stroke="currentColor" stroke-width="1.1" opacity=".6"/></svg></span><span class="ar zr"> <svg width="7" height="15"><path d="M2 4h3v1h-3zM2 11h3v1h-3zM1 5h1v6h-1zM5 5h1v6h-1z" opacity=".85"/><path d="M1 4h1v1h-1zM5 4h1v1h-1zM1 11h1v1h-1zM5 11h1v1h-1z" opacity=".25"/><path d="M1.9 8.9L5.1 7.1" stroke="currentColor" stroke-width="1.1" opacity=".6"/></svg></span>4<span class="ar zr"> <svg width="7" height="15"><path d="M2 4h3v1h-3zM2 11h3v1h-3zM1 5h1v6h-1zM5 5h1v6h-1z" opacity=".85"/><path d="M1 4h1v1h-1zM5 4h1v1h-1zM1 11h1v1h-1zM5 11h1v1h-1z" opacity=".25"/><path d="M1.9 8.9L5.1 7.1" stroke="currentColor" stroke-width="1.1" opacity=".6"/></svg></span>21E<span class="ar zr"> <svg width="7" height="15"><path d="M2 4h3v1h-3zM2 11h3v1h-3zM1 5h1v6h-1zM5 5h1v6h-1z" opacity=".85"/><path d="M1 4h1v1h-1zM5 4h1v1h-1zM1 11h1v1h-1zM5 11h1v1h-1z" opacity=".25"/><path d="M1.9 8.9L5.1 7.1" stroke="currentColor" stroke-width="1.1" opacity=".6"/></svg></span></span> <span class="b">8A 4F <span class="ar zr"> <svg width="7" height="15"><path d="M2 4h3v1h-3zM2 11h3v1h-3zM1 5h1v6h-1zM5 5h1v6h-1z" opacity=".85"/><path d="M1 4h1v1h-1zM5 4h1v1h-1zM1 11h1v1h-1zM5 11h1v1h-1z" opacity=".25"/><path d="M1.9 8.9L5.1 7.1" stroke="currentColor" stroke-width="1.1" opacity=".6"/></svg></span>1</span>                                <span class="n">mov</span>     <span class="n">cl, [edi+</span><span class="g">1</span><span class="n">]</span></div>
<div class="r" style="top:543px"><span class="k">.text:<span class="ar zr"> <svg width="7" height="15"><path d="M2 4h3v1h-3zM2 11h3v1h-3zM1 5h1v6h-1zM5 5h1v6h-1z" opacity=".85"/><path d="M1 4h1v1h-1zM5 4h1v1h-1zM1 11h1v1h-1zM5 11h1v1h-1z" opacity=".25"/><path d="M1.9 8.9L5.1 7.1" stroke="currentColor" stroke-width="1.1" opacity=".6"/></svg></span><span class="ar zr"> <svg width="7" height="15"><path d="M2 4h3v1h-3zM2 11h3v1h-3zM1 5h1v6h-1zM5 5h1v6h-1z" opacity=".85"/><path d="M1 4h1v1h-1zM5 4h1v1h-1zM1 11h1v1h-1zM5 11h1v1h-1z" opacity=".25"/><path d="M1.9 8.9L5.1 7.1" stroke="currentColor" stroke-width="1.1" opacity=".6"/></svg></span>4<span class="ar zr"> <svg width="7" height="15"><path d="M2 4h3v1h-3zM2 11h3v1h-3zM1 5h1v6h-1zM5 5h1v6h-1z" opacity=".85"/><path d="M1 4h1v1h-1zM5 4h1v1h-1zM1 11h1v1h-1zM5 11h1v1h-1z" opacity=".25"/><path d="M1.9 8.9L5.1 7.1" stroke="currentColor" stroke-width="1.1" opacity=".6"/></svg></span>21E3</span> <span class="b">47</span>                                      <span class="n">inc</span>     <span class="n">edi</span></div>
<div class="r" style="top:558px"><span class="b">.text:<span class="ar zr"> <svg width="7" height="15"><path d="M2 4h3v1h-3zM2 11h3v1h-3zM1 5h1v6h-1zM5 5h1v6h-1z" opacity=".85"/><path d="M1 4h1v1h-1zM5 4h1v1h-1zM1 11h1v1h-1zM5 11h1v1h-1z" opacity=".25"/><path d="M1.9 8.9L5.1 7.1" stroke="currentColor" stroke-width="1.1" opacity=".6"/></svg></span><span class="ar zr"> <svg width="7" height="15"><path d="M2 4h3v1h-3zM2 11h3v1h-3zM1 5h1v6h-1zM5 5h1v6h-1z" opacity=".85"/><path d="M1 4h1v1h-1zM5 4h1v1h-1zM1 11h1v1h-1zM5 11h1v1h-1z" opacity=".25"/><path d="M1.9 8.9L5.1 7.1" stroke="currentColor" stroke-width="1.1" opacity=".6"/></svg></span>4<span class="ar zr"> <svg width="7" height="15"><path d="M2 4h3v1h-3zM2 11h3v1h-3zM1 5h1v6h-1zM5 5h1v6h-1z" opacity=".85"/><path d="M1 4h1v1h-1zM5 4h1v1h-1zM1 11h1v1h-1zM5 11h1v1h-1z" opacity=".25"/><path d="M1.9 8.9L5.1 7.1" stroke="currentColor" stroke-width="1.1" opacity=".6"/></svg></span>21E4</span> <span class="b">84 C9</span>                                   <span class="n">test</span>    <span class="n">cl, cl</span></div>
<div class="r" style="top:573px"><span class="k">.text:<span class="ar zr"> <svg width="7" height="15"><path d="M2 4h3v1h-3zM2 11h3v1h-3zM1 5h1v6h-1zM5 5h1v6h-1z" opacity=".85"/><path d="M1 4h1v1h-1zM5 4h1v1h-1zM1 11h1v1h-1zM5 11h1v1h-1z" opacity=".25"/><path d="M1.9 8.9L5.1 7.1" stroke="currentColor" stroke-width="1.1" opacity=".6"/></svg></span><span class="ar zr"> <svg width="7" height="15"><path d="M2 4h3v1h-3zM2 11h3v1h-3zM1 5h1v6h-1zM5 5h1v6h-1z" opacity=".85"/><path d="M1 4h1v1h-1zM5 4h1v1h-1zM1 11h1v1h-1zM5 11h1v1h-1z" opacity=".25"/><path d="M1.9 8.9L5.1 7.1" stroke="currentColor" stroke-width="1.1" opacity=".6"/></svg></span>4<span class="ar zr"> <svg width="7" height="15"><path d="M2 4h3v1h-3zM2 11h3v1h-3zM1 5h1v6h-1zM5 5h1v6h-1z" opacity=".85"/><path d="M1 4h1v1h-1zM5 4h1v1h-1zM1 11h1v1h-1zM5 11h1v1h-1z" opacity=".25"/><path d="M1.9 8.9L5.1 7.1" stroke="currentColor" stroke-width="1.1" opacity=".6"/></svg></span>21E6</span> <span class="b">75 F8</span>                                   <span class="n">jnz</span>     <span class="n">short loc<span class="u">_</span>4<span class="ar zr"> <svg width="7" height="15"><path d="M2 4h3v1h-3zM2 11h3v1h-3zM1 5h1v6h-1zM5 5h1v6h-1z" opacity=".85"/><path d="M1 4h1v1h-1zM5 4h1v1h-1zM1 11h1v1h-1zM5 11h1v1h-1z" opacity=".25"/><path d="M1.9 8.9L5.1 7.1" stroke="currentColor" stroke-width="1.1" opacity=".6"/></svg></span>21E<span class="ar zr"> <svg width="7" height="15"><path d="M2 4h3v1h-3zM2 11h3v1h-3zM1 5h1v6h-1zM5 5h1v6h-1z" opacity=".85"/><path d="M1 4h1v1h-1zM5 4h1v1h-1zM1 11h1v1h-1zM5 11h1v1h-1z" opacity=".25"/><path d="M1.9 8.9L5.1 7.1" stroke="currentColor" stroke-width="1.1" opacity=".6"/></svg></span></span></div>
<div class="r" style="top:588px"><span class="k">.text:<span class="ar zr"> <svg width="7" height="15"><path d="M2 4h3v1h-3zM2 11h3v1h-3zM1 5h1v6h-1zM5 5h1v6h-1z" opacity=".85"/><path d="M1 4h1v1h-1zM5 4h1v1h-1zM1 11h1v1h-1zM5 11h1v1h-1z" opacity=".25"/><path d="M1.9 8.9L5.1 7.1" stroke="currentColor" stroke-width="1.1" opacity=".6"/></svg></span><span class="ar zr"> <svg width="7" height="15"><path d="M2 4h3v1h-3zM2 11h3v1h-3zM1 5h1v6h-1zM5 5h1v6h-1z" opacity=".85"/><path d="M1 4h1v1h-1zM5 4h1v1h-1zM1 11h1v1h-1zM5 11h1v1h-1z" opacity=".25"/><path d="M1.9 8.9L5.1 7.1" stroke="currentColor" stroke-width="1.1" opacity=".6"/></svg></span>4<span class="ar zr"> <svg width="7" height="15"><path d="M2 4h3v1h-3zM2 11h3v1h-3zM1 5h1v6h-1zM5 5h1v6h-1z" opacity=".85"/><path d="M1 4h1v1h-1zM5 4h1v1h-1zM1 11h1v1h-1zM5 11h1v1h-1z" opacity=".25"/><path d="M1.9 8.9L5.1 7.1" stroke="currentColor" stroke-width="1.1" opacity=".6"/></svg></span>21E8</span> <span class="b">8B C8</span>                                   <span class="n">mov</span>     <span class="n">ecx, eax</span></div>
<div class="r" style="top:603px"><span class="k">.text:<span class="ar zr"> <svg width="7" height="15"><path d="M2 4h3v1h-3zM2 11h3v1h-3zM1 5h1v6h-1zM5 5h1v6h-1z" opacity=".85"/><path d="M1 4h1v1h-1zM5 4h1v1h-1zM1 11h1v1h-1zM5 11h1v1h-1z" opacity=".25"/><path d="M1.9 8.9L5.1 7.1" stroke="currentColor" stroke-width="1.1" opacity=".6"/></svg></span><span class="ar zr"> <svg width="7" height="15"><path d="M2 4h3v1h-3zM2 11h3v1h-3zM1 5h1v6h-1zM5 5h1v6h-1z" opacity=".85"/><path d="M1 4h1v1h-1zM5 4h1v1h-1zM1 11h1v1h-1zM5 11h1v1h-1z" opacity=".25"/><path d="M1.9 8.9L5.1 7.1" stroke="currentColor" stroke-width="1.1" opacity=".6"/></svg></span>4<span class="ar zr"> <svg width="7" height="15"><path d="M2 4h3v1h-3zM2 11h3v1h-3zM1 5h1v6h-1zM5 5h1v6h-1z" opacity=".85"/><path d="M1 4h1v1h-1zM5 4h1v1h-1zM1 11h1v1h-1zM5 11h1v1h-1z" opacity=".25"/><path d="M1.9 8.9L5.1 7.1" stroke="currentColor" stroke-width="1.1" opacity=".6"/></svg></span>21EA</span> <span class="b">C1 E9 <span class="ar zr"> <svg width="7" height="15"><path d="M2 4h3v1h-3zM2 11h3v1h-3zM1 5h1v6h-1zM5 5h1v6h-1z" opacity=".85"/><path d="M1 4h1v1h-1zM5 4h1v1h-1zM1 11h1v1h-1zM5 11h1v1h-1z" opacity=".25"/><path d="M1.9 8.9L5.1 7.1" stroke="currentColor" stroke-width="1.1" opacity=".6"/></svg></span>2</span>                                <span class="n">shr</span>     <span class="n">ecx, </span><span class="g">2</span></div>
<div class="r" style="top:618px"><span class="k">.text:<span class="ar zr"> <svg width="7" height="15"><path d="M2 4h3v1h-3zM2 11h3v1h-3zM1 5h1v6h-1zM5 5h1v6h-1z" opacity=".85"/><path d="M1 4h1v1h-1zM5 4h1v1h-1zM1 11h1v1h-1zM5 11h1v1h-1z" opacity=".25"/><path d="M1.9 8.9L5.1 7.1" stroke="currentColor" stroke-width="1.1" opacity=".6"/></svg></span><span class="ar zr"> <svg width="7" height="15"><path d="M2 4h3v1h-3zM2 11h3v1h-3zM1 5h1v6h-1zM5 5h1v6h-1z" opacity=".85"/><path d="M1 4h1v1h-1zM5 4h1v1h-1zM1 11h1v1h-1zM5 11h1v1h-1z" opacity=".25"/><path d="M1.9 8.9L5.1 7.1" stroke="currentColor" stroke-width="1.1" opacity=".6"/></svg></span>4<span class="ar zr"> <svg width="7" height="15"><path d="M2 4h3v1h-3zM2 11h3v1h-3zM1 5h1v6h-1zM5 5h1v6h-1z" opacity=".85"/><path d="M1 4h1v1h-1zM5 4h1v1h-1zM1 11h1v1h-1zM5 11h1v1h-1z" opacity=".25"/><path d="M1.9 8.9L5.1 7.1" stroke="currentColor" stroke-width="1.1" opacity=".6"/></svg></span>21ED</span> <span class="b">F3 A5</span>                                   <span class="n">rep movsd</span></div>
<div class="r" style="top:633px"><span class="k">.text:<span class="ar zr"> <svg width="7" height="15"><path d="M2 4h3v1h-3zM2 11h3v1h-3zM1 5h1v6h-1zM5 5h1v6h-1z" opacity=".85"/><path d="M1 4h1v1h-1zM5 4h1v1h-1zM1 11h1v1h-1zM5 11h1v1h-1z" opacity=".25"/><path d="M1.9 8.9L5.1 7.1" stroke="currentColor" stroke-width="1.1" opacity=".6"/></svg></span><span class="ar zr"> <svg width="7" height="15"><path d="M2 4h3v1h-3zM2 11h3v1h-3zM1 5h1v6h-1zM5 5h1v6h-1z" opacity=".85"/><path d="M1 4h1v1h-1zM5 4h1v1h-1zM1 11h1v1h-1zM5 11h1v1h-1z" opacity=".25"/><path d="M1.9 8.9L5.1 7.1" stroke="currentColor" stroke-width="1.1" opacity=".6"/></svg></span>4<span class="ar zr"> <svg width="7" height="15"><path d="M2 4h3v1h-3zM2 11h3v1h-3zM1 5h1v6h-1zM5 5h1v6h-1z" opacity=".85"/><path d="M1 4h1v1h-1zM5 4h1v1h-1zM1 11h1v1h-1zM5 11h1v1h-1z" opacity=".25"/><path d="M1.9 8.9L5.1 7.1" stroke="currentColor" stroke-width="1.1" opacity=".6"/></svg></span>21EF</span> <span class="b">8B C8</span>                                   <span class="n">mov</span>     <span class="n">ecx, eax</span></div>
<div class="r" style="top:648px"><span class="k">.text:<span class="ar zr"> <svg width="7" height="15"><path d="M2 4h3v1h-3zM2 11h3v1h-3zM1 5h1v6h-1zM5 5h1v6h-1z" opacity=".85"/><path d="M1 4h1v1h-1zM5 4h1v1h-1zM1 11h1v1h-1zM5 11h1v1h-1z" opacity=".25"/><path d="M1.9 8.9L5.1 7.1" stroke="currentColor" stroke-width="1.1" opacity=".6"/></svg></span><span class="ar zr"> <svg width="7" height="15"><path d="M2 4h3v1h-3zM2 11h3v1h-3zM1 5h1v6h-1zM5 5h1v6h-1z" opacity=".85"/><path d="M1 4h1v1h-1zM5 4h1v1h-1zM1 11h1v1h-1zM5 11h1v1h-1z" opacity=".25"/><path d="M1.9 8.9L5.1 7.1" stroke="currentColor" stroke-width="1.1" opacity=".6"/></svg></span>4<span class="ar zr"> <svg width="7" height="15"><path d="M2 4h3v1h-3zM2 11h3v1h-3zM1 5h1v6h-1zM5 5h1v6h-1z" opacity=".85"/><path d="M1 4h1v1h-1zM5 4h1v1h-1zM1 11h1v1h-1zM5 11h1v1h-1z" opacity=".25"/><path d="M1.9 8.9L5.1 7.1" stroke="currentColor" stroke-width="1.1" opacity=".6"/></svg></span>21F1</span> <span class="b">83 E1 <span class="ar zr"> <svg width="7" height="15"><path d="M2 4h3v1h-3zM2 11h3v1h-3zM1 5h1v6h-1zM5 5h1v6h-1z" opacity=".85"/><path d="M1 4h1v1h-1zM5 4h1v1h-1zM1 11h1v1h-1zM5 11h1v1h-1z" opacity=".25"/><path d="M1.9 8.9L5.1 7.1" stroke="currentColor" stroke-width="1.1" opacity=".6"/></svg></span>3</span>                                <span class="n">and</span>     <span class="n">ecx, </span><span class="g">3</span></div>
<div class="r" style="top:663px"><span class="k">.text:<span class="ar zr"> <svg width="7" height="15"><path d="M2 4h3v1h-3zM2 11h3v1h-3zM1 5h1v6h-1zM5 5h1v6h-1z" opacity=".85"/><path d="M1 4h1v1h-1zM5 4h1v1h-1zM1 11h1v1h-1zM5 11h1v1h-1z" opacity=".25"/><path d="M1.9 8.9L5.1 7.1" stroke="currentColor" stroke-width="1.1" opacity=".6"/></svg></span><span class="ar zr"> <svg width="7" height="15"><path d="M2 4h3v1h-3zM2 11h3v1h-3zM1 5h1v6h-1zM5 5h1v6h-1z" opacity=".85"/><path d="M1 4h1v1h-1zM5 4h1v1h-1zM1 11h1v1h-1zM5 11h1v1h-1z" opacity=".25"/><path d="M1.9 8.9L5.1 7.1" stroke="currentColor" stroke-width="1.1" opacity=".6"/></svg></span>4<span class="ar zr"> <svg width="7" height="15"><path d="M2 4h3v1h-3zM2 11h3v1h-3zM1 5h1v6h-1zM5 5h1v6h-1z" opacity=".85"/><path d="M1 4h1v1h-1zM5 4h1v1h-1zM1 11h1v1h-1zM5 11h1v1h-1z" opacity=".25"/><path d="M1.9 8.9L5.1 7.1" stroke="currentColor" stroke-width="1.1" opacity=".6"/></svg></span>21F4</span> <span class="b">F3 A4</span>                                   <span class="n">rep movsb</span></div>
<div class="r" style="top:678px"><span class="k">.text:<span class="ar zr"> <svg width="7" height="15"><path d="M2 4h3v1h-3zM2 11h3v1h-3zM1 5h1v6h-1zM5 5h1v6h-1z" opacity=".85"/><path d="M1 4h1v1h-1zM5 4h1v1h-1zM1 11h1v1h-1zM5 11h1v1h-1z" opacity=".25"/><path d="M1.9 8.9L5.1 7.1" stroke="currentColor" stroke-width="1.1" opacity=".6"/></svg></span><span class="ar zr"> <svg width="7" height="15"><path d="M2 4h3v1h-3zM2 11h3v1h-3zM1 5h1v6h-1zM5 5h1v6h-1z" opacity=".85"/><path d="M1 4h1v1h-1zM5 4h1v1h-1zM1 11h1v1h-1zM5 11h1v1h-1z" opacity=".25"/><path d="M1.9 8.9L5.1 7.1" stroke="currentColor" stroke-width="1.1" opacity=".6"/></svg></span>4<span class="ar zr"> <svg width="7" height="15"><path d="M2 4h3v1h-3zM2 11h3v1h-3zM1 5h1v6h-1zM5 5h1v6h-1z" opacity=".85"/><path d="M1 4h1v1h-1zM5 4h1v1h-1zM1 11h1v1h-1zM5 11h1v1h-1z" opacity=".25"/><path d="M1.9 8.9L5.1 7.1" stroke="currentColor" stroke-width="1.1" opacity=".6"/></svg></span>21F6</span> <span class="b">8D 8C 24 18 14 <span class="ar zr"> <svg width="7" height="15"><path d="M2 4h3v1h-3zM2 11h3v1h-3zM1 5h1v6h-1zM5 5h1v6h-1z" opacity=".85"/><path d="M1 4h1v1h-1zM5 4h1v1h-1zM1 11h1v1h-1zM5 11h1v1h-1z" opacity=".25"/><path d="M1.9 8.9L5.1 7.1" stroke="currentColor" stroke-width="1.1" opacity=".6"/></svg></span><span class="ar zr"> <svg width="7" height="15"><path d="M2 4h3v1h-3zM2 11h3v1h-3zM1 5h1v6h-1zM5 5h1v6h-1z" opacity=".85"/><path d="M1 4h1v1h-1zM5 4h1v1h-1zM1 11h1v1h-1zM5 11h1v1h-1z" opacity=".25"/><path d="M1.9 8.9L5.1 7.1" stroke="currentColor" stroke-width="1.1" opacity=".6"/></svg></span> <span class="ar zr"> <svg width="7" height="15"><path d="M2 4h3v1h-3zM2 11h3v1h-3zM1 5h1v6h-1zM5 5h1v6h-1z" opacity=".85"/><path d="M1 4h1v1h-1zM5 4h1v1h-1zM1 11h1v1h-1zM5 11h1v1h-1z" opacity=".25"/><path d="M1.9 8.9L5.1 7.1" stroke="currentColor" stroke-width="1.1" opacity=".6"/></svg></span><span class="ar zr"> <svg width="7" height="15"><path d="M2 4h3v1h-3zM2 11h3v1h-3zM1 5h1v6h-1zM5 5h1v6h-1z" opacity=".85"/><path d="M1 4h1v1h-1zM5 4h1v1h-1zM1 11h1v1h-1zM5 11h1v1h-1z" opacity=".25"/><path d="M1.9 8.9L5.1 7.1" stroke="currentColor" stroke-width="1.1" opacity=".6"/></svg></span></span>                    <span class="n">lea</span>     <span class="n">ecx, [esp+</span><span class="g">242<span class="ar zr"> <svg width="7" height="15"><path d="M2 4h3v1h-3zM2 11h3v1h-3zM1 5h1v6h-1zM5 5h1v6h-1z" opacity=".85"/><path d="M1 4h1v1h-1zM5 4h1v1h-1zM1 11h1v1h-1zM5 11h1v1h-1z" opacity=".25"/><path d="M1.9 8.9L5.1 7.1" stroke="currentColor" stroke-width="1.1" opacity=".6"/></svg></span>h+var<span class="u">_</span>1<span class="ar zr"> <svg width="7" height="15"><path d="M2 4h3v1h-3zM2 11h3v1h-3zM1 5h1v6h-1zM5 5h1v6h-1z" opacity=".85"/><path d="M1 4h1v1h-1zM5 4h1v1h-1zM1 11h1v1h-1zM5 11h1v1h-1z" opacity=".25"/><path d="M1.9 8.9L5.1 7.1" stroke="currentColor" stroke-width="1.1" opacity=".6"/></svg></span><span class="ar zr"> <svg width="7" height="15"><path d="M2 4h3v1h-3zM2 11h3v1h-3zM1 5h1v6h-1zM5 5h1v6h-1z" opacity=".85"/><path d="M1 4h1v1h-1zM5 4h1v1h-1zM1 11h1v1h-1zM5 11h1v1h-1z" opacity=".25"/><path d="M1.9 8.9L5.1 7.1" stroke="currentColor" stroke-width="1.1" opacity=".6"/></svg></span>8</span><span class="n">]</span></div>
<div class="r" style="top:693px"><span class="k">.text:<span class="ar zr"> <svg width="7" height="15"><path d="M2 4h3v1h-3zM2 11h3v1h-3zM1 5h1v6h-1zM5 5h1v6h-1z" opacity=".85"/><path d="M1 4h1v1h-1zM5 4h1v1h-1zM1 11h1v1h-1zM5 11h1v1h-1z" opacity=".25"/><path d="M1.9 8.9L5.1 7.1" stroke="currentColor" stroke-width="1.1" opacity=".6"/></svg></span><span class="ar zr"> <svg width="7" height="15"><path d="M2 4h3v1h-3zM2 11h3v1h-3zM1 5h1v6h-1zM5 5h1v6h-1z" opacity=".85"/><path d="M1 4h1v1h-1zM5 4h1v1h-1zM1 11h1v1h-1zM5 11h1v1h-1z" opacity=".25"/><path d="M1.9 8.9L5.1 7.1" stroke="currentColor" stroke-width="1.1" opacity=".6"/></svg></span>4<span class="ar zr"> <svg width="7" height="15"><path d="M2 4h3v1h-3zM2 11h3v1h-3zM1 5h1v6h-1zM5 5h1v6h-1z" opacity=".85"/><path d="M1 4h1v1h-1zM5 4h1v1h-1zM1 11h1v1h-1zM5 11h1v1h-1z" opacity=".25"/><path d="M1.9 8.9L5.1 7.1" stroke="currentColor" stroke-width="1.1" opacity=".6"/></svg></span>21FD</span> <span class="b">E8 DE <span class="ar zr"> <svg width="7" height="15"><path d="M2 4h3v1h-3zM2 11h3v1h-3zM1 5h1v6h-1zM5 5h1v6h-1z" opacity=".85"/><path d="M1 4h1v1h-1zM5 4h1v1h-1zM1 11h1v1h-1zM5 11h1v1h-1z" opacity=".25"/><path d="M1.9 8.9L5.1 7.1" stroke="currentColor" stroke-width="1.1" opacity=".6"/></svg></span>D <span class="ar zr"> <svg width="7" height="15"><path d="M2 4h3v1h-3zM2 11h3v1h-3zM1 5h1v6h-1zM5 5h1v6h-1z" opacity=".85"/><path d="M1 4h1v1h-1zM5 4h1v1h-1zM1 11h1v1h-1zM5 11h1v1h-1z" opacity=".25"/><path d="M1.9 8.9L5.1 7.1" stroke="currentColor" stroke-width="1.1" opacity=".6"/></svg></span><span class="ar zr"> <svg width="7" height="15"><path d="M2 4h3v1h-3zM2 11h3v1h-3zM1 5h1v6h-1zM5 5h1v6h-1z" opacity=".85"/><path d="M1 4h1v1h-1zM5 4h1v1h-1zM1 11h1v1h-1zM5 11h1v1h-1z" opacity=".25"/><path d="M1.9 8.9L5.1 7.1" stroke="currentColor" stroke-width="1.1" opacity=".6"/></svg></span> <span class="ar zr"> <svg width="7" height="15"><path d="M2 4h3v1h-3zM2 11h3v1h-3zM1 5h1v6h-1zM5 5h1v6h-1z" opacity=".85"/><path d="M1 4h1v1h-1zM5 4h1v1h-1zM1 11h1v1h-1zM5 11h1v1h-1z" opacity=".25"/><path d="M1.9 8.9L5.1 7.1" stroke="currentColor" stroke-width="1.1" opacity=".6"/></svg></span><span class="ar zr"> <svg width="7" height="15"><path d="M2 4h3v1h-3zM2 11h3v1h-3zM1 5h1v6h-1zM5 5h1v6h-1z" opacity=".85"/><path d="M1 4h1v1h-1zM5 4h1v1h-1zM1 11h1v1h-1zM5 11h1v1h-1z" opacity=".25"/><path d="M1.9 8.9L5.1 7.1" stroke="currentColor" stroke-width="1.1" opacity=".6"/></svg></span></span>                          <span class="n">call</span>    <span class="n">sub<span class="u">_</span>4<span class="ar zr"> <svg width="7" height="15"><path d="M2 4h3v1h-3zM2 11h3v1h-3zM1 5h1v6h-1zM5 5h1v6h-1z" opacity=".85"/><path d="M1 4h1v1h-1zM5 4h1v1h-1zM1 11h1v1h-1zM5 11h1v1h-1z" opacity=".25"/><path d="M1.9 8.9L5.1 7.1" stroke="currentColor" stroke-width="1.1" opacity=".6"/></svg></span>2FE<span class="ar zr"> <svg width="7" height="15"><path d="M2 4h3v1h-3zM2 11h3v1h-3zM1 5h1v6h-1zM5 5h1v6h-1z" opacity=".85"/><path d="M1 4h1v1h-1zM5 4h1v1h-1zM1 11h1v1h-1zM5 11h1v1h-1z" opacity=".25"/><path d="M1.9 8.9L5.1 7.1" stroke="currentColor" stroke-width="1.1" opacity=".6"/></svg></span></span></div>
<div class="r" style="top:708px"><span class="k">.text:<span class="ar zr"> <svg width="7" height="15"><path d="M2 4h3v1h-3zM2 11h3v1h-3zM1 5h1v6h-1zM5 5h1v6h-1z" opacity=".85"/><path d="M1 4h1v1h-1zM5 4h1v1h-1zM1 11h1v1h-1zM5 11h1v1h-1z" opacity=".25"/><path d="M1.9 8.9L5.1 7.1" stroke="currentColor" stroke-width="1.1" opacity=".6"/></svg></span><span class="ar zr"> <svg width="7" height="15"><path d="M2 4h3v1h-3zM2 11h3v1h-3zM1 5h1v6h-1zM5 5h1v6h-1z" opacity=".85"/><path d="M1 4h1v1h-1zM5 4h1v1h-1zM1 11h1v1h-1zM5 11h1v1h-1z" opacity=".25"/><path d="M1.9 8.9L5.1 7.1" stroke="currentColor" stroke-width="1.1" opacity=".6"/></svg></span>4<span class="ar zr"> <svg width="7" height="15"><path d="M2 4h3v1h-3zM2 11h3v1h-3zM1 5h1v6h-1zM5 5h1v6h-1z" opacity=".85"/><path d="M1 4h1v1h-1zM5 4h1v1h-1zM1 11h1v1h-1zM5 11h1v1h-1z" opacity=".25"/><path d="M1.9 8.9L5.1 7.1" stroke="currentColor" stroke-width="1.1" opacity=".6"/></svg></span>22<span class="ar zr"> <svg width="7" height="15"><path d="M2 4h3v1h-3zM2 11h3v1h-3zM1 5h1v6h-1zM5 5h1v6h-1z" opacity=".85"/><path d="M1 4h1v1h-1zM5 4h1v1h-1zM1 11h1v1h-1zM5 11h1v1h-1z" opacity=".25"/><path d="M1.9 8.9L5.1 7.1" stroke="currentColor" stroke-width="1.1" opacity=".6"/></svg></span>2</span> <span class="b">68 6<span class="ar zr"> <svg width="7" height="15"><path d="M2 4h3v1h-3zM2 11h3v1h-3zM1 5h1v6h-1zM5 5h1v6h-1z" opacity=".85"/><path d="M1 4h1v1h-1zM5 4h1v1h-1zM1 11h1v1h-1zM5 11h1v1h-1z" opacity=".25"/><path d="M1.9 8.9L5.1 7.1" stroke="currentColor" stroke-width="1.1" opacity=".6"/></svg></span> EA <span class="ar zr"> <svg width="7" height="15"><path d="M2 4h3v1h-3zM2 11h3v1h-3zM1 5h1v6h-1zM5 5h1v6h-1z" opacity=".85"/><path d="M1 4h1v1h-1zM5 4h1v1h-1zM1 11h1v1h-1zM5 11h1v1h-1z" opacity=".25"/><path d="M1.9 8.9L5.1 7.1" stroke="currentColor" stroke-width="1.1" opacity=".6"/></svg></span><span class="ar zr"> <svg width="7" height="15"><path d="M2 4h3v1h-3zM2 11h3v1h-3zM1 5h1v6h-1zM5 5h1v6h-1z" opacity=".85"/><path d="M1 4h1v1h-1zM5 4h1v1h-1zM1 11h1v1h-1zM5 11h1v1h-1z" opacity=".25"/><path d="M1.9 8.9L5.1 7.1" stroke="currentColor" stroke-width="1.1" opacity=".6"/></svg></span> <span class="ar zr"> <svg width="7" height="15"><path d="M2 4h3v1h-3zM2 11h3v1h-3zM1 5h1v6h-1zM5 5h1v6h-1z" opacity=".85"/><path d="M1 4h1v1h-1zM5 4h1v1h-1zM1 11h1v1h-1zM5 11h1v1h-1z" opacity=".25"/><path d="M1.9 8.9L5.1 7.1" stroke="currentColor" stroke-width="1.1" opacity=".6"/></svg></span><span class="ar zr"> <svg width="7" height="15"><path d="M2 4h3v1h-3zM2 11h3v1h-3zM1 5h1v6h-1zM5 5h1v6h-1z" opacity=".85"/><path d="M1 4h1v1h-1zM5 4h1v1h-1zM1 11h1v1h-1zM5 11h1v1h-1z" opacity=".25"/><path d="M1.9 8.9L5.1 7.1" stroke="currentColor" stroke-width="1.1" opacity=".6"/></svg></span></span>                          <span class="n">push</span>    <span class="g">6<span class="ar zr"> <svg width="7" height="15"><path d="M2 4h3v1h-3zM2 11h3v1h-3zM1 5h1v6h-1zM5 5h1v6h-1z" opacity=".85"/><path d="M1 4h1v1h-1zM5 4h1v1h-1zM1 11h1v1h-1zM5 11h1v1h-1z" opacity=".25"/><path d="M1.9 8.9L5.1 7.1" stroke="currentColor" stroke-width="1.1" opacity=".6"/></svg></span><span class="ar zr"> <svg width="7" height="15"><path d="M2 4h3v1h-3zM2 11h3v1h-3zM1 5h1v6h-1zM5 5h1v6h-1z" opacity=".85"/><path d="M1 4h1v1h-1zM5 4h1v1h-1zM1 11h1v1h-1zM5 11h1v1h-1z" opacity=".25"/><path d="M1.9 8.9L5.1 7.1" stroke="currentColor" stroke-width="1.1" opacity=".6"/></svg></span><span class="ar zr"> <svg width="7" height="15"><path d="M2 4h3v1h-3zM2 11h3v1h-3zM1 5h1v6h-1zM5 5h1v6h-1z" opacity=".85"/><path d="M1 4h1v1h-1zM5 4h1v1h-1zM1 11h1v1h-1zM5 11h1v1h-1z" opacity=".25"/><path d="M1.9 8.9L5.1 7.1" stroke="currentColor" stroke-width="1.1" opacity=".6"/></svg></span><span class="ar zr"> <svg width="7" height="15"><path d="M2 4h3v1h-3zM2 11h3v1h-3zM1 5h1v6h-1zM5 5h1v6h-1z" opacity=".85"/><path d="M1 4h1v1h-1zM5 4h1v1h-1zM1 11h1v1h-1zM5 11h1v1h-1z" opacity=".25"/><path d="M1.9 8.9L5.1 7.1" stroke="currentColor" stroke-width="1.1" opacity=".6"/></svg></span></span>           <span class="c">; dwMilliseconds</span></div>
<div class="r" style="top:723px"><span class="k">.text:<span class="ar zr"> <svg width="7" height="15"><path d="M2 4h3v1h-3zM2 11h3v1h-3zM1 5h1v6h-1zM5 5h1v6h-1z" opacity=".85"/><path d="M1 4h1v1h-1zM5 4h1v1h-1zM1 11h1v1h-1zM5 11h1v1h-1z" opacity=".25"/><path d="M1.9 8.9L5.1 7.1" stroke="currentColor" stroke-width="1.1" opacity=".6"/></svg></span><span class="ar zr"> <svg width="7" height="15"><path d="M2 4h3v1h-3zM2 11h3v1h-3zM1 5h1v6h-1zM5 5h1v6h-1z" opacity=".85"/><path d="M1 4h1v1h-1zM5 4h1v1h-1zM1 11h1v1h-1zM5 11h1v1h-1z" opacity=".25"/><path d="M1.9 8.9L5.1 7.1" stroke="currentColor" stroke-width="1.1" opacity=".6"/></svg></span>4<span class="ar zr"> <svg width="7" height="15"><path d="M2 4h3v1h-3zM2 11h3v1h-3zM1 5h1v6h-1zM5 5h1v6h-1z" opacity=".85"/><path d="M1 4h1v1h-1zM5 4h1v1h-1zM1 11h1v1h-1zM5 11h1v1h-1z" opacity=".25"/><path d="M1.9 8.9L5.1 7.1" stroke="currentColor" stroke-width="1.1" opacity=".6"/></svg></span>22<span class="ar zr"> <svg width="7" height="15"><path d="M2 4h3v1h-3zM2 11h3v1h-3zM1 5h1v6h-1zM5 5h1v6h-1z" opacity=".85"/><path d="M1 4h1v1h-1zM5 4h1v1h-1zM1 11h1v1h-1zM5 11h1v1h-1z" opacity=".25"/><path d="M1.9 8.9L5.1 7.1" stroke="currentColor" stroke-width="1.1" opacity=".6"/></svg></span>7</span> <span class="b">FF D3</span>                                   <span class="n">call</span>    <span class="n">ebx</span><span class="gr"> ; </span><span class="m">Sleep</span></div>
<div class="r" style="top:738px"><span class="k">.text:<span class="ar zr"> <svg width="7" height="15"><path d="M2 4h3v1h-3zM2 11h3v1h-3zM1 5h1v6h-1zM5 5h1v6h-1z" opacity=".85"/><path d="M1 4h1v1h-1zM5 4h1v1h-1zM1 11h1v1h-1zM5 11h1v1h-1z" opacity=".25"/><path d="M1.9 8.9L5.1 7.1" stroke="currentColor" stroke-width="1.1" opacity=".6"/></svg></span><span class="ar zr"> <svg width="7" height="15"><path d="M2 4h3v1h-3zM2 11h3v1h-3zM1 5h1v6h-1zM5 5h1v6h-1z" opacity=".85"/><path d="M1 4h1v1h-1zM5 4h1v1h-1zM1 11h1v1h-1zM5 11h1v1h-1z" opacity=".25"/><path d="M1.9 8.9L5.1 7.1" stroke="currentColor" stroke-width="1.1" opacity=".6"/></svg></span>4<span class="ar zr"> <svg width="7" height="15"><path d="M2 4h3v1h-3zM2 11h3v1h-3zM1 5h1v6h-1zM5 5h1v6h-1z" opacity=".85"/><path d="M1 4h1v1h-1zM5 4h1v1h-1zM1 11h1v1h-1zM5 11h1v1h-1z" opacity=".25"/><path d="M1.9 8.9L5.1 7.1" stroke="currentColor" stroke-width="1.1" opacity=".6"/></svg></span>22<span class="ar zr"> <svg width="7" height="15"><path d="M2 4h3v1h-3zM2 11h3v1h-3zM1 5h1v6h-1zM5 5h1v6h-1z" opacity=".85"/><path d="M1 4h1v1h-1zM5 4h1v1h-1zM1 11h1v1h-1zM5 11h1v1h-1z" opacity=".25"/><path d="M1.9 8.9L5.1 7.1" stroke="currentColor" stroke-width="1.1" opacity=".6"/></svg></span>9</span> <span class="b">E9 72 FF FF FF</span>                          <span class="n">jmp</span>     <span class="n">loc<span class="u">_</span>4<span class="ar zr"> <svg width="7" height="15"><path d="M2 4h3v1h-3zM2 11h3v1h-3zM1 5h1v6h-1zM5 5h1v6h-1z" opacity=".85"/><path d="M1 4h1v1h-1zM5 4h1v1h-1zM1 11h1v1h-1zM5 11h1v1h-1z" opacity=".25"/><path d="M1.9 8.9L5.1 7.1" stroke="currentColor" stroke-width="1.1" opacity=".6"/></svg></span>218<span class="ar zr"> <svg width="7" height="15"><path d="M2 4h3v1h-3zM2 11h3v1h-3zM1 5h1v6h-1zM5 5h1v6h-1z" opacity=".85"/><path d="M1 4h1v1h-1zM5 4h1v1h-1zM1 11h1v1h-1zM5 11h1v1h-1z" opacity=".25"/><path d="M1.9 8.9L5.1 7.1" stroke="currentColor" stroke-width="1.1" opacity=".6"/></svg></span></span></div>
<div class="r" style="top:753px"><span class="k">.text:<span class="ar zr"> <svg width="7" height="15"><path d="M2 4h3v1h-3zM2 11h3v1h-3zM1 5h1v6h-1zM5 5h1v6h-1z" opacity=".85"/><path d="M1 4h1v1h-1zM5 4h1v1h-1zM1 11h1v1h-1zM5 11h1v1h-1z" opacity=".25"/><path d="M1.9 8.9L5.1 7.1" stroke="currentColor" stroke-width="1.1" opacity=".6"/></svg></span><span class="ar zr"> <svg width="7" height="15"><path d="M2 4h3v1h-3zM2 11h3v1h-3zM1 5h1v6h-1zM5 5h1v6h-1z" opacity=".85"/><path d="M1 4h1v1h-1zM5 4h1v1h-1zM1 11h1v1h-1zM5 11h1v1h-1z" opacity=".25"/><path d="M1.9 8.9L5.1 7.1" stroke="currentColor" stroke-width="1.1" opacity=".6"/></svg></span>4<span class="ar zr"> <svg width="7" height="15"><path d="M2 4h3v1h-3zM2 11h3v1h-3zM1 5h1v6h-1zM5 5h1v6h-1z" opacity=".85"/><path d="M1 4h1v1h-1zM5 4h1v1h-1zM1 11h1v1h-1zM5 11h1v1h-1z" opacity=".25"/><path d="M1.9 8.9L5.1 7.1" stroke="currentColor" stroke-width="1.1" opacity=".6"/></svg></span>22<span class="ar zr"> <svg width="7" height="15"><path d="M2 4h3v1h-3zM2 11h3v1h-3zM1 5h1v6h-1zM5 5h1v6h-1z" opacity=".85"/><path d="M1 4h1v1h-1zM5 4h1v1h-1zM1 11h1v1h-1zM5 11h1v1h-1z" opacity=".25"/><path d="M1.9 8.9L5.1 7.1" stroke="currentColor" stroke-width="1.1" opacity=".6"/></svg></span>9</span>                         <span class="n">sub<span class="u">_</span>4<span class="ar zr"> <svg width="7" height="15"><path d="M2 4h3v1h-3zM2 11h3v1h-3zM1 5h1v6h-1zM5 5h1v6h-1z" opacity=".85"/><path d="M1 4h1v1h-1zM5 4h1v1h-1zM1 11h1v1h-1zM5 11h1v1h-1z" opacity=".25"/><path d="M1.9 8.9L5.1 7.1" stroke="currentColor" stroke-width="1.1" opacity=".6"/></svg></span>1B4<span class="ar zr"> <svg width="7" height="15"><path d="M2 4h3v1h-3zM2 11h3v1h-3zM1 5h1v6h-1zM5 5h1v6h-1z" opacity=".85"/><path d="M1 4h1v1h-1zM5 4h1v1h-1zM1 11h1v1h-1zM5 11h1v1h-1z" opacity=".25"/><path d="M1.9 8.9L5.1 7.1" stroke="currentColor" stroke-width="1.1" opacity=".6"/></svg></span></span>      <span class="b">endp</span></div>
<div id="dash"></div>
<div id="box"></div>
</body></html>
